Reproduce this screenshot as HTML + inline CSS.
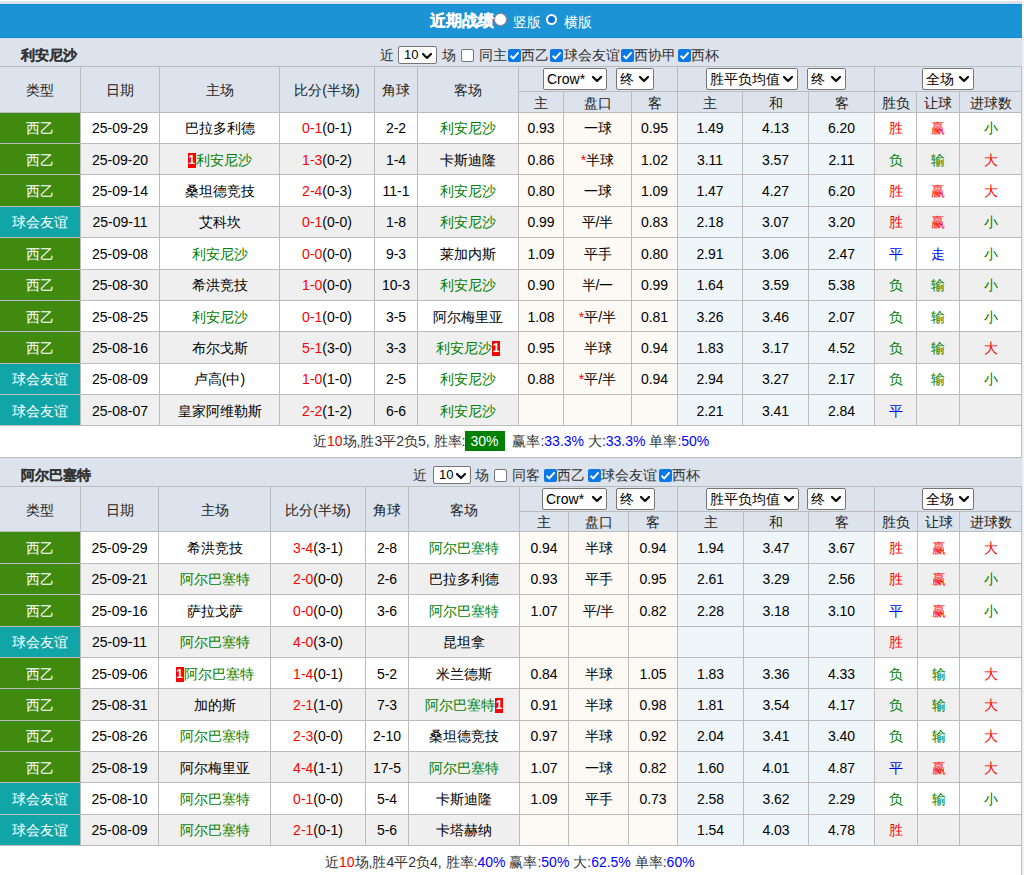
<!DOCTYPE html>
<html><head><meta charset="utf-8"><style>
html,body{margin:0;padding:0;}
body{width:1024px;height:875px;overflow:hidden;position:relative;background:#fff;font-family:"Liberation Sans",sans-serif;font-size:14px;color:#333;}
body div{position:absolute;box-sizing:content-box;}
.c{display:flex;align-items:center;justify-content:center;white-space:nowrap;}
.sel{background:#fff;border:1px solid #767676;border-radius:2px;color:#000;}
.bd{display:inline-block;background:#f00;color:#fff;font-weight:bold;font-size:12px;line-height:15px;height:15px;width:8px;text-align:center;vertical-align:middle;}
.sum{white-space:nowrap;color:#333;}
.pct{display:inline-block;background:#008000;color:#fff;padding:0 6px;line-height:20px;height:20px;margin:0 4px 0 -1px;}
</style></head><body>
<div style="left:0px;top:1px;width:1022px;height:3px;background:#dce3ed;"></div>
<div style="left:0px;top:4px;width:1022px;height:34px;background:#1c93d4;"></div>
<div style="left:0px;top:4px;width:1022px;height:1px;background:#0a88dc;"></div>
<div style="left:0px;top:37px;width:1022px;height:1px;background:#0a88dc;"></div>
<div style="left:1022px;top:38px;width:2px;height:837px;background:#f0f0f0;"></div>
<div class="c" style="left:430px;top:4px;height:34px;line-height:34px;color:#fff;font-size:16px;font-weight:bold;justify-content:flex-start;-webkit-text-stroke:0.3px #fff;">近期战绩</div>
<div style="left:494px;top:13px;width:11px;height:11px;border-radius:50%;background:#fff;border:1px solid #b08080"></div>
<div class="c" style="left:513px;top:5px;height:34px;line-height:34px;color:#fff;font-size:14px;justify-content:flex-start;">竖版</div>
<div style="left:546px;top:14px;width:7px;height:7px;border-radius:50%;background:#0b6fd8;border:2px solid #fff"></div>
<div class="c" style="left:564px;top:5px;height:34px;line-height:34px;color:#fff;font-size:14px;justify-content:flex-start;">横版</div>
<div style="left:0px;top:38px;width:1022px;height:28px;background:#dce3ed;"></div>
<div class="c" style="left:21px;top:41px;width:179px;height:28px;line-height:28px;color:#333;font-size:14px;font-weight:bold;text-align:left;justify-content:flex-start;-webkit-text-stroke:0.15px #333;">利安尼沙</div>
<div style="left:0px;top:66px;width:1022px;height:46px;background:#dce3ed;"></div>
<div style="left:0px;top:66px;width:1022px;height:1px;background:#bcbcbc;"></div>
<div style="left:518px;top:91px;width:503px;height:1px;background:#bcbcbc;"></div>
<div style="left:0px;top:112px;width:1022px;height:1px;background:#bcbcbc;"></div>
<div style="left:80px;top:66px;width:1px;height:46px;background:#bcbcbc;"></div>
<div style="left:159px;top:66px;width:1px;height:46px;background:#bcbcbc;"></div>
<div style="left:279px;top:66px;width:1px;height:46px;background:#bcbcbc;"></div>
<div style="left:374px;top:66px;width:1px;height:46px;background:#bcbcbc;"></div>
<div style="left:417px;top:66px;width:1px;height:46px;background:#bcbcbc;"></div>
<div style="left:518px;top:66px;width:1px;height:46px;background:#bcbcbc;"></div>
<div style="left:563px;top:91px;width:1px;height:21px;background:#bcbcbc;"></div>
<div style="left:631px;top:91px;width:1px;height:21px;background:#bcbcbc;"></div>
<div style="left:677px;top:66px;width:1px;height:46px;background:#bcbcbc;"></div>
<div style="left:742px;top:91px;width:1px;height:21px;background:#bcbcbc;"></div>
<div style="left:808px;top:91px;width:1px;height:21px;background:#bcbcbc;"></div>
<div style="left:874px;top:66px;width:1px;height:46px;background:#bcbcbc;"></div>
<div style="left:916px;top:91px;width:1px;height:21px;background:#bcbcbc;"></div>
<div style="left:959px;top:91px;width:1px;height:21px;background:#bcbcbc;"></div>
<div style="left:1021px;top:66px;width:1px;height:46px;background:#bcbcbc;"></div>
<div class="c" style="left:0px;top:68px;width:80px;height:45px;line-height:45px;color:#222;font-size:14px;">类型</div>
<div class="c" style="left:81px;top:68px;width:78px;height:45px;line-height:45px;color:#222;font-size:14px;">日期</div>
<div class="c" style="left:160px;top:68px;width:119px;height:45px;line-height:45px;color:#222;font-size:14px;">主场</div>
<div class="c" style="left:280px;top:68px;width:94px;height:45px;line-height:45px;color:#222;font-size:14px;">比分(半场)</div>
<div class="c" style="left:375px;top:68px;width:42px;height:45px;line-height:45px;color:#222;font-size:14px;">角球</div>
<div class="c" style="left:418px;top:68px;width:100px;height:45px;line-height:45px;color:#222;font-size:14px;">客场</div>
<div class="c" style="left:519px;top:93px;width:44px;height:20px;line-height:20px;color:#222;font-size:14px;">主</div>
<div class="c" style="left:564px;top:93px;width:67px;height:20px;line-height:20px;color:#222;font-size:14px;">盘口</div>
<div class="c" style="left:632px;top:93px;width:45px;height:20px;line-height:20px;color:#222;font-size:14px;">客</div>
<div class="c" style="left:678px;top:93px;width:64px;height:20px;line-height:20px;color:#222;font-size:14px;">主</div>
<div class="c" style="left:743px;top:93px;width:65px;height:20px;line-height:20px;color:#222;font-size:14px;">和</div>
<div class="c" style="left:809px;top:93px;width:65px;height:20px;line-height:20px;color:#222;font-size:14px;">客</div>
<div class="c" style="left:875px;top:93px;width:41px;height:20px;line-height:20px;color:#222;font-size:14px;">胜负</div>
<div class="c" style="left:917px;top:93px;width:42px;height:20px;line-height:20px;color:#222;font-size:14px;">让球</div>
<div class="c" style="left:960px;top:93px;width:61px;height:20px;line-height:20px;color:#222;font-size:14px;">进球数</div>
<div class="sel" style="left:543px;top:68px;width:62px;height:20px;"><span style="position:absolute;left:3px;top:0;line-height:20px;font-size:14px">Crow*</span><svg style="position:absolute;left:48px;top:7px" width="10" height="6" viewBox="0 0 10 6"><path d="M1 1 L5.0 5 L9 1" fill="none" stroke="#111" stroke-width="2.3" stroke-linecap="round" stroke-linejoin="round"/></svg></div>
<div class="sel" style="left:616px;top:68px;width:36px;height:20px;"><span style="position:absolute;left:3px;top:0;line-height:20px;font-size:14px">终</span><svg style="position:absolute;left:22px;top:7px" width="10" height="6" viewBox="0 0 10 6"><path d="M1 1 L5.0 5 L9 1" fill="none" stroke="#111" stroke-width="2.3" stroke-linecap="round" stroke-linejoin="round"/></svg></div>
<div class="sel" style="left:706px;top:68px;width:90px;height:20px;"><span style="position:absolute;left:3px;top:0;line-height:20px;font-size:14px">胜平负均值</span><svg style="position:absolute;left:76px;top:7px" width="10" height="6" viewBox="0 0 10 6"><path d="M1 1 L5.0 5 L9 1" fill="none" stroke="#111" stroke-width="2.3" stroke-linecap="round" stroke-linejoin="round"/></svg></div>
<div class="sel" style="left:807px;top:68px;width:37px;height:20px;"><span style="position:absolute;left:3px;top:0;line-height:20px;font-size:14px">终</span><svg style="position:absolute;left:23px;top:7px" width="10" height="6" viewBox="0 0 10 6"><path d="M1 1 L5.0 5 L9 1" fill="none" stroke="#111" stroke-width="2.3" stroke-linecap="round" stroke-linejoin="round"/></svg></div>
<div class="sel" style="left:922px;top:68px;width:50px;height:20px;"><span style="position:absolute;left:3px;top:0;line-height:20px;font-size:14px">全场</span><svg style="position:absolute;left:36px;top:7px" width="10" height="6" viewBox="0 0 10 6"><path d="M1 1 L5.0 5 L9 1" fill="none" stroke="#111" stroke-width="2.3" stroke-linecap="round" stroke-linejoin="round"/></svg></div>
<div style="left:0px;top:113px;width:80px;height:30px;background:#408a10;"></div>
<div style="left:81px;top:113px;width:78px;height:30px;background:#fff;"></div>
<div style="left:160px;top:113px;width:119px;height:30px;background:#fff;"></div>
<div style="left:280px;top:113px;width:94px;height:30px;background:#fff;"></div>
<div style="left:375px;top:113px;width:42px;height:30px;background:#fff;"></div>
<div style="left:418px;top:113px;width:100px;height:30px;background:#fff;"></div>
<div style="left:519px;top:113px;width:44px;height:30px;background:#fdf9f5;"></div>
<div style="left:564px;top:113px;width:67px;height:30px;background:#fdf9f5;"></div>
<div style="left:632px;top:113px;width:45px;height:30px;background:#fdf9f5;"></div>
<div style="left:678px;top:113px;width:64px;height:30px;background:#eff6fa;"></div>
<div style="left:743px;top:113px;width:65px;height:30px;background:#eff6fa;"></div>
<div style="left:809px;top:113px;width:65px;height:30px;background:#eff6fa;"></div>
<div style="left:875px;top:113px;width:41px;height:30px;background:#fff;"></div>
<div style="left:917px;top:113px;width:42px;height:30px;background:#fff;"></div>
<div style="left:960px;top:113px;width:61px;height:30px;background:#fff;"></div>
<div class="c" style="left:0px;top:113px;width:80px;height:30px;line-height:30px;color:#fff;font-size:14px;">西乙</div>
<div class="c" style="left:81px;top:113px;width:78px;height:30px;line-height:30px;color:#000;font-size:14px;">25-09-29</div>
<div class="c" style="left:160px;top:113px;width:119px;height:30px;line-height:30px;color:#000;font-size:14px;">巴拉多利德</div>
<div class="c" style="left:280px;top:113px;width:94px;height:30px;line-height:30px;color:#000;font-size:14px;"><span style="color:#ff0000">0-1</span>(0-1)</div>
<div class="c" style="left:375px;top:113px;width:42px;height:30px;line-height:30px;color:#000;font-size:14px;">2-2</div>
<div class="c" style="left:418px;top:113px;width:100px;height:30px;line-height:30px;color:#008000;font-size:14px;">利安尼沙</div>
<div class="c" style="left:519px;top:113px;width:44px;height:30px;line-height:30px;color:#000;font-size:14px;">0.93</div>
<div class="c" style="left:564px;top:113px;width:67px;height:30px;line-height:30px;color:#000;font-size:14px;">一球</div>
<div class="c" style="left:632px;top:113px;width:45px;height:30px;line-height:30px;color:#000;font-size:14px;">0.95</div>
<div class="c" style="left:678px;top:113px;width:64px;height:30px;line-height:30px;color:#000;font-size:14px;">1.49</div>
<div class="c" style="left:743px;top:113px;width:65px;height:30px;line-height:30px;color:#000;font-size:14px;">4.13</div>
<div class="c" style="left:809px;top:113px;width:65px;height:30px;line-height:30px;color:#000;font-size:14px;">6.20</div>
<div class="c" style="left:875px;top:113px;width:41px;height:30px;line-height:30px;color:#ff0000;font-size:14px;">胜</div>
<div class="c" style="left:917px;top:113px;width:42px;height:30px;line-height:30px;color:#ff0000;font-size:14px;">赢</div>
<div class="c" style="left:960px;top:113px;width:61px;height:30px;line-height:30px;color:#008000;font-size:14px;">小</div>
<div style="left:0px;top:144px;width:80px;height:30px;background:#408a10;"></div>
<div style="left:81px;top:144px;width:78px;height:30px;background:#efefef;"></div>
<div style="left:160px;top:144px;width:119px;height:30px;background:#efefef;"></div>
<div style="left:280px;top:144px;width:94px;height:30px;background:#efefef;"></div>
<div style="left:375px;top:144px;width:42px;height:30px;background:#efefef;"></div>
<div style="left:418px;top:144px;width:100px;height:30px;background:#efefef;"></div>
<div style="left:519px;top:144px;width:44px;height:30px;background:#fdf9f5;"></div>
<div style="left:564px;top:144px;width:67px;height:30px;background:#fdf9f5;"></div>
<div style="left:632px;top:144px;width:45px;height:30px;background:#fdf9f5;"></div>
<div style="left:678px;top:144px;width:64px;height:30px;background:#eff6fa;"></div>
<div style="left:743px;top:144px;width:65px;height:30px;background:#eff6fa;"></div>
<div style="left:809px;top:144px;width:65px;height:30px;background:#eff6fa;"></div>
<div style="left:875px;top:144px;width:41px;height:30px;background:#efefef;"></div>
<div style="left:917px;top:144px;width:42px;height:30px;background:#efefef;"></div>
<div style="left:960px;top:144px;width:61px;height:30px;background:#efefef;"></div>
<div class="c" style="left:0px;top:145px;width:80px;height:30px;line-height:30px;color:#fff;font-size:14px;">西乙</div>
<div class="c" style="left:81px;top:145px;width:78px;height:30px;line-height:30px;color:#000;font-size:14px;">25-09-20</div>
<div class="c" style="left:160px;top:145px;width:119px;height:30px;line-height:30px;color:#008000;font-size:14px;"><span class="bd">1</span>利安尼沙</div>
<div class="c" style="left:280px;top:145px;width:94px;height:30px;line-height:30px;color:#000;font-size:14px;"><span style="color:#ff0000">1-3</span>(0-2)</div>
<div class="c" style="left:375px;top:145px;width:42px;height:30px;line-height:30px;color:#000;font-size:14px;">1-4</div>
<div class="c" style="left:418px;top:145px;width:100px;height:30px;line-height:30px;color:#000;font-size:14px;">卡斯迪隆</div>
<div class="c" style="left:519px;top:145px;width:44px;height:30px;line-height:30px;color:#000;font-size:14px;">0.86</div>
<div class="c" style="left:564px;top:145px;width:67px;height:30px;line-height:30px;color:#000;font-size:14px;"><span style="color:#ff0000">*</span>半球</div>
<div class="c" style="left:632px;top:145px;width:45px;height:30px;line-height:30px;color:#000;font-size:14px;">1.02</div>
<div class="c" style="left:678px;top:145px;width:64px;height:30px;line-height:30px;color:#000;font-size:14px;">3.11</div>
<div class="c" style="left:743px;top:145px;width:65px;height:30px;line-height:30px;color:#000;font-size:14px;">3.57</div>
<div class="c" style="left:809px;top:145px;width:65px;height:30px;line-height:30px;color:#000;font-size:14px;">2.11</div>
<div class="c" style="left:875px;top:145px;width:41px;height:30px;line-height:30px;color:#008000;font-size:14px;">负</div>
<div class="c" style="left:917px;top:145px;width:42px;height:30px;line-height:30px;color:#008000;font-size:14px;">输</div>
<div class="c" style="left:960px;top:145px;width:61px;height:30px;line-height:30px;color:#ff0000;font-size:14px;">大</div>
<div style="left:0px;top:175px;width:80px;height:31px;background:#408a10;"></div>
<div style="left:81px;top:175px;width:78px;height:31px;background:#fff;"></div>
<div style="left:160px;top:175px;width:119px;height:31px;background:#fff;"></div>
<div style="left:280px;top:175px;width:94px;height:31px;background:#fff;"></div>
<div style="left:375px;top:175px;width:42px;height:31px;background:#fff;"></div>
<div style="left:418px;top:175px;width:100px;height:31px;background:#fff;"></div>
<div style="left:519px;top:175px;width:44px;height:31px;background:#fdf9f5;"></div>
<div style="left:564px;top:175px;width:67px;height:31px;background:#fdf9f5;"></div>
<div style="left:632px;top:175px;width:45px;height:31px;background:#fdf9f5;"></div>
<div style="left:678px;top:175px;width:64px;height:31px;background:#eff6fa;"></div>
<div style="left:743px;top:175px;width:65px;height:31px;background:#eff6fa;"></div>
<div style="left:809px;top:175px;width:65px;height:31px;background:#eff6fa;"></div>
<div style="left:875px;top:175px;width:41px;height:31px;background:#fff;"></div>
<div style="left:917px;top:175px;width:42px;height:31px;background:#fff;"></div>
<div style="left:960px;top:175px;width:61px;height:31px;background:#fff;"></div>
<div class="c" style="left:0px;top:176px;width:80px;height:30px;line-height:30px;color:#fff;font-size:14px;">西乙</div>
<div class="c" style="left:81px;top:176px;width:78px;height:30px;line-height:30px;color:#000;font-size:14px;">25-09-14</div>
<div class="c" style="left:160px;top:176px;width:119px;height:30px;line-height:30px;color:#000;font-size:14px;">桑坦德竞技</div>
<div class="c" style="left:280px;top:176px;width:94px;height:30px;line-height:30px;color:#000;font-size:14px;"><span style="color:#ff0000">2-4</span>(0-3)</div>
<div class="c" style="left:375px;top:176px;width:42px;height:30px;line-height:30px;color:#000;font-size:14px;">11-1</div>
<div class="c" style="left:418px;top:176px;width:100px;height:30px;line-height:30px;color:#008000;font-size:14px;">利安尼沙</div>
<div class="c" style="left:519px;top:176px;width:44px;height:30px;line-height:30px;color:#000;font-size:14px;">0.80</div>
<div class="c" style="left:564px;top:176px;width:67px;height:30px;line-height:30px;color:#000;font-size:14px;">一球</div>
<div class="c" style="left:632px;top:176px;width:45px;height:30px;line-height:30px;color:#000;font-size:14px;">1.09</div>
<div class="c" style="left:678px;top:176px;width:64px;height:30px;line-height:30px;color:#000;font-size:14px;">1.47</div>
<div class="c" style="left:743px;top:176px;width:65px;height:30px;line-height:30px;color:#000;font-size:14px;">4.27</div>
<div class="c" style="left:809px;top:176px;width:65px;height:30px;line-height:30px;color:#000;font-size:14px;">6.20</div>
<div class="c" style="left:875px;top:176px;width:41px;height:30px;line-height:30px;color:#ff0000;font-size:14px;">胜</div>
<div class="c" style="left:917px;top:176px;width:42px;height:30px;line-height:30px;color:#ff0000;font-size:14px;">赢</div>
<div class="c" style="left:960px;top:176px;width:61px;height:30px;line-height:30px;color:#ff0000;font-size:14px;">大</div>
<div style="left:0px;top:207px;width:80px;height:30px;background:#12a5a8;"></div>
<div style="left:81px;top:207px;width:78px;height:30px;background:#efefef;"></div>
<div style="left:160px;top:207px;width:119px;height:30px;background:#efefef;"></div>
<div style="left:280px;top:207px;width:94px;height:30px;background:#efefef;"></div>
<div style="left:375px;top:207px;width:42px;height:30px;background:#efefef;"></div>
<div style="left:418px;top:207px;width:100px;height:30px;background:#efefef;"></div>
<div style="left:519px;top:207px;width:44px;height:30px;background:#fdf9f5;"></div>
<div style="left:564px;top:207px;width:67px;height:30px;background:#fdf9f5;"></div>
<div style="left:632px;top:207px;width:45px;height:30px;background:#fdf9f5;"></div>
<div style="left:678px;top:207px;width:64px;height:30px;background:#eff6fa;"></div>
<div style="left:743px;top:207px;width:65px;height:30px;background:#eff6fa;"></div>
<div style="left:809px;top:207px;width:65px;height:30px;background:#eff6fa;"></div>
<div style="left:875px;top:207px;width:41px;height:30px;background:#efefef;"></div>
<div style="left:917px;top:207px;width:42px;height:30px;background:#efefef;"></div>
<div style="left:960px;top:207px;width:61px;height:30px;background:#efefef;"></div>
<div class="c" style="left:0px;top:207px;width:80px;height:30px;line-height:30px;color:#fff;font-size:14px;">球会友谊</div>
<div class="c" style="left:81px;top:207px;width:78px;height:30px;line-height:30px;color:#000;font-size:14px;">25-09-11</div>
<div class="c" style="left:160px;top:207px;width:119px;height:30px;line-height:30px;color:#000;font-size:14px;">艾科坎</div>
<div class="c" style="left:280px;top:207px;width:94px;height:30px;line-height:30px;color:#000;font-size:14px;"><span style="color:#ff0000">0-1</span>(0-0)</div>
<div class="c" style="left:375px;top:207px;width:42px;height:30px;line-height:30px;color:#000;font-size:14px;">1-8</div>
<div class="c" style="left:418px;top:207px;width:100px;height:30px;line-height:30px;color:#008000;font-size:14px;">利安尼沙</div>
<div class="c" style="left:519px;top:207px;width:44px;height:30px;line-height:30px;color:#000;font-size:14px;">0.99</div>
<div class="c" style="left:564px;top:207px;width:67px;height:30px;line-height:30px;color:#000;font-size:14px;">平/半</div>
<div class="c" style="left:632px;top:207px;width:45px;height:30px;line-height:30px;color:#000;font-size:14px;">0.83</div>
<div class="c" style="left:678px;top:207px;width:64px;height:30px;line-height:30px;color:#000;font-size:14px;">2.18</div>
<div class="c" style="left:743px;top:207px;width:65px;height:30px;line-height:30px;color:#000;font-size:14px;">3.07</div>
<div class="c" style="left:809px;top:207px;width:65px;height:30px;line-height:30px;color:#000;font-size:14px;">3.20</div>
<div class="c" style="left:875px;top:207px;width:41px;height:30px;line-height:30px;color:#ff0000;font-size:14px;">胜</div>
<div class="c" style="left:917px;top:207px;width:42px;height:30px;line-height:30px;color:#ff0000;font-size:14px;">赢</div>
<div class="c" style="left:960px;top:207px;width:61px;height:30px;line-height:30px;color:#008000;font-size:14px;">小</div>
<div style="left:0px;top:238px;width:80px;height:31px;background:#408a10;"></div>
<div style="left:81px;top:238px;width:78px;height:31px;background:#fff;"></div>
<div style="left:160px;top:238px;width:119px;height:31px;background:#fff;"></div>
<div style="left:280px;top:238px;width:94px;height:31px;background:#fff;"></div>
<div style="left:375px;top:238px;width:42px;height:31px;background:#fff;"></div>
<div style="left:418px;top:238px;width:100px;height:31px;background:#fff;"></div>
<div style="left:519px;top:238px;width:44px;height:31px;background:#fdf9f5;"></div>
<div style="left:564px;top:238px;width:67px;height:31px;background:#fdf9f5;"></div>
<div style="left:632px;top:238px;width:45px;height:31px;background:#fdf9f5;"></div>
<div style="left:678px;top:238px;width:64px;height:31px;background:#eff6fa;"></div>
<div style="left:743px;top:238px;width:65px;height:31px;background:#eff6fa;"></div>
<div style="left:809px;top:238px;width:65px;height:31px;background:#eff6fa;"></div>
<div style="left:875px;top:238px;width:41px;height:31px;background:#fff;"></div>
<div style="left:917px;top:238px;width:42px;height:31px;background:#fff;"></div>
<div style="left:960px;top:238px;width:61px;height:31px;background:#fff;"></div>
<div class="c" style="left:0px;top:239px;width:80px;height:30px;line-height:30px;color:#fff;font-size:14px;">西乙</div>
<div class="c" style="left:81px;top:239px;width:78px;height:30px;line-height:30px;color:#000;font-size:14px;">25-09-08</div>
<div class="c" style="left:160px;top:239px;width:119px;height:30px;line-height:30px;color:#008000;font-size:14px;">利安尼沙</div>
<div class="c" style="left:280px;top:239px;width:94px;height:30px;line-height:30px;color:#000;font-size:14px;"><span style="color:#ff0000">0-0</span>(0-0)</div>
<div class="c" style="left:375px;top:239px;width:42px;height:30px;line-height:30px;color:#000;font-size:14px;">9-3</div>
<div class="c" style="left:418px;top:239px;width:100px;height:30px;line-height:30px;color:#000;font-size:14px;">莱加内斯</div>
<div class="c" style="left:519px;top:239px;width:44px;height:30px;line-height:30px;color:#000;font-size:14px;">1.09</div>
<div class="c" style="left:564px;top:239px;width:67px;height:30px;line-height:30px;color:#000;font-size:14px;">平手</div>
<div class="c" style="left:632px;top:239px;width:45px;height:30px;line-height:30px;color:#000;font-size:14px;">0.80</div>
<div class="c" style="left:678px;top:239px;width:64px;height:30px;line-height:30px;color:#000;font-size:14px;">2.91</div>
<div class="c" style="left:743px;top:239px;width:65px;height:30px;line-height:30px;color:#000;font-size:14px;">3.06</div>
<div class="c" style="left:809px;top:239px;width:65px;height:30px;line-height:30px;color:#000;font-size:14px;">2.47</div>
<div class="c" style="left:875px;top:239px;width:41px;height:30px;line-height:30px;color:#0000ff;font-size:14px;">平</div>
<div class="c" style="left:917px;top:239px;width:42px;height:30px;line-height:30px;color:#0000ff;font-size:14px;">走</div>
<div class="c" style="left:960px;top:239px;width:61px;height:30px;line-height:30px;color:#008000;font-size:14px;">小</div>
<div style="left:0px;top:270px;width:80px;height:30px;background:#408a10;"></div>
<div style="left:81px;top:270px;width:78px;height:30px;background:#efefef;"></div>
<div style="left:160px;top:270px;width:119px;height:30px;background:#efefef;"></div>
<div style="left:280px;top:270px;width:94px;height:30px;background:#efefef;"></div>
<div style="left:375px;top:270px;width:42px;height:30px;background:#efefef;"></div>
<div style="left:418px;top:270px;width:100px;height:30px;background:#efefef;"></div>
<div style="left:519px;top:270px;width:44px;height:30px;background:#fdf9f5;"></div>
<div style="left:564px;top:270px;width:67px;height:30px;background:#fdf9f5;"></div>
<div style="left:632px;top:270px;width:45px;height:30px;background:#fdf9f5;"></div>
<div style="left:678px;top:270px;width:64px;height:30px;background:#eff6fa;"></div>
<div style="left:743px;top:270px;width:65px;height:30px;background:#eff6fa;"></div>
<div style="left:809px;top:270px;width:65px;height:30px;background:#eff6fa;"></div>
<div style="left:875px;top:270px;width:41px;height:30px;background:#efefef;"></div>
<div style="left:917px;top:270px;width:42px;height:30px;background:#efefef;"></div>
<div style="left:960px;top:270px;width:61px;height:30px;background:#efefef;"></div>
<div class="c" style="left:0px;top:270px;width:80px;height:30px;line-height:30px;color:#fff;font-size:14px;">西乙</div>
<div class="c" style="left:81px;top:270px;width:78px;height:30px;line-height:30px;color:#000;font-size:14px;">25-08-30</div>
<div class="c" style="left:160px;top:270px;width:119px;height:30px;line-height:30px;color:#000;font-size:14px;">希洪竞技</div>
<div class="c" style="left:280px;top:270px;width:94px;height:30px;line-height:30px;color:#000;font-size:14px;"><span style="color:#ff0000">1-0</span>(0-0)</div>
<div class="c" style="left:375px;top:270px;width:42px;height:30px;line-height:30px;color:#000;font-size:14px;">10-3</div>
<div class="c" style="left:418px;top:270px;width:100px;height:30px;line-height:30px;color:#008000;font-size:14px;">利安尼沙</div>
<div class="c" style="left:519px;top:270px;width:44px;height:30px;line-height:30px;color:#000;font-size:14px;">0.90</div>
<div class="c" style="left:564px;top:270px;width:67px;height:30px;line-height:30px;color:#000;font-size:14px;">半/一</div>
<div class="c" style="left:632px;top:270px;width:45px;height:30px;line-height:30px;color:#000;font-size:14px;">0.99</div>
<div class="c" style="left:678px;top:270px;width:64px;height:30px;line-height:30px;color:#000;font-size:14px;">1.64</div>
<div class="c" style="left:743px;top:270px;width:65px;height:30px;line-height:30px;color:#000;font-size:14px;">3.59</div>
<div class="c" style="left:809px;top:270px;width:65px;height:30px;line-height:30px;color:#000;font-size:14px;">5.38</div>
<div class="c" style="left:875px;top:270px;width:41px;height:30px;line-height:30px;color:#008000;font-size:14px;">负</div>
<div class="c" style="left:917px;top:270px;width:42px;height:30px;line-height:30px;color:#008000;font-size:14px;">输</div>
<div class="c" style="left:960px;top:270px;width:61px;height:30px;line-height:30px;color:#008000;font-size:14px;">小</div>
<div style="left:0px;top:301px;width:80px;height:30px;background:#408a10;"></div>
<div style="left:81px;top:301px;width:78px;height:30px;background:#fff;"></div>
<div style="left:160px;top:301px;width:119px;height:30px;background:#fff;"></div>
<div style="left:280px;top:301px;width:94px;height:30px;background:#fff;"></div>
<div style="left:375px;top:301px;width:42px;height:30px;background:#fff;"></div>
<div style="left:418px;top:301px;width:100px;height:30px;background:#fff;"></div>
<div style="left:519px;top:301px;width:44px;height:30px;background:#fdf9f5;"></div>
<div style="left:564px;top:301px;width:67px;height:30px;background:#fdf9f5;"></div>
<div style="left:632px;top:301px;width:45px;height:30px;background:#fdf9f5;"></div>
<div style="left:678px;top:301px;width:64px;height:30px;background:#eff6fa;"></div>
<div style="left:743px;top:301px;width:65px;height:30px;background:#eff6fa;"></div>
<div style="left:809px;top:301px;width:65px;height:30px;background:#eff6fa;"></div>
<div style="left:875px;top:301px;width:41px;height:30px;background:#fff;"></div>
<div style="left:917px;top:301px;width:42px;height:30px;background:#fff;"></div>
<div style="left:960px;top:301px;width:61px;height:30px;background:#fff;"></div>
<div class="c" style="left:0px;top:302px;width:80px;height:30px;line-height:30px;color:#fff;font-size:14px;">西乙</div>
<div class="c" style="left:81px;top:302px;width:78px;height:30px;line-height:30px;color:#000;font-size:14px;">25-08-25</div>
<div class="c" style="left:160px;top:302px;width:119px;height:30px;line-height:30px;color:#008000;font-size:14px;">利安尼沙</div>
<div class="c" style="left:280px;top:302px;width:94px;height:30px;line-height:30px;color:#000;font-size:14px;"><span style="color:#ff0000">0-1</span>(0-0)</div>
<div class="c" style="left:375px;top:302px;width:42px;height:30px;line-height:30px;color:#000;font-size:14px;">3-5</div>
<div class="c" style="left:418px;top:302px;width:100px;height:30px;line-height:30px;color:#000;font-size:14px;">阿尔梅里亚</div>
<div class="c" style="left:519px;top:302px;width:44px;height:30px;line-height:30px;color:#000;font-size:14px;">1.08</div>
<div class="c" style="left:564px;top:302px;width:67px;height:30px;line-height:30px;color:#000;font-size:14px;"><span style="color:#ff0000">*</span>平/半</div>
<div class="c" style="left:632px;top:302px;width:45px;height:30px;line-height:30px;color:#000;font-size:14px;">0.81</div>
<div class="c" style="left:678px;top:302px;width:64px;height:30px;line-height:30px;color:#000;font-size:14px;">3.26</div>
<div class="c" style="left:743px;top:302px;width:65px;height:30px;line-height:30px;color:#000;font-size:14px;">3.46</div>
<div class="c" style="left:809px;top:302px;width:65px;height:30px;line-height:30px;color:#000;font-size:14px;">2.07</div>
<div class="c" style="left:875px;top:302px;width:41px;height:30px;line-height:30px;color:#008000;font-size:14px;">负</div>
<div class="c" style="left:917px;top:302px;width:42px;height:30px;line-height:30px;color:#008000;font-size:14px;">输</div>
<div class="c" style="left:960px;top:302px;width:61px;height:30px;line-height:30px;color:#008000;font-size:14px;">小</div>
<div style="left:0px;top:332px;width:80px;height:31px;background:#408a10;"></div>
<div style="left:81px;top:332px;width:78px;height:31px;background:#efefef;"></div>
<div style="left:160px;top:332px;width:119px;height:31px;background:#efefef;"></div>
<div style="left:280px;top:332px;width:94px;height:31px;background:#efefef;"></div>
<div style="left:375px;top:332px;width:42px;height:31px;background:#efefef;"></div>
<div style="left:418px;top:332px;width:100px;height:31px;background:#efefef;"></div>
<div style="left:519px;top:332px;width:44px;height:31px;background:#fdf9f5;"></div>
<div style="left:564px;top:332px;width:67px;height:31px;background:#fdf9f5;"></div>
<div style="left:632px;top:332px;width:45px;height:31px;background:#fdf9f5;"></div>
<div style="left:678px;top:332px;width:64px;height:31px;background:#eff6fa;"></div>
<div style="left:743px;top:332px;width:65px;height:31px;background:#eff6fa;"></div>
<div style="left:809px;top:332px;width:65px;height:31px;background:#eff6fa;"></div>
<div style="left:875px;top:332px;width:41px;height:31px;background:#efefef;"></div>
<div style="left:917px;top:332px;width:42px;height:31px;background:#efefef;"></div>
<div style="left:960px;top:332px;width:61px;height:31px;background:#efefef;"></div>
<div class="c" style="left:0px;top:333px;width:80px;height:30px;line-height:30px;color:#fff;font-size:14px;">西乙</div>
<div class="c" style="left:81px;top:333px;width:78px;height:30px;line-height:30px;color:#000;font-size:14px;">25-08-16</div>
<div class="c" style="left:160px;top:333px;width:119px;height:30px;line-height:30px;color:#000;font-size:14px;">布尔戈斯</div>
<div class="c" style="left:280px;top:333px;width:94px;height:30px;line-height:30px;color:#000;font-size:14px;"><span style="color:#ff0000">5-1</span>(3-0)</div>
<div class="c" style="left:375px;top:333px;width:42px;height:30px;line-height:30px;color:#000;font-size:14px;">3-3</div>
<div class="c" style="left:418px;top:333px;width:100px;height:30px;line-height:30px;color:#008000;font-size:14px;">利安尼沙<span class="bd">1</span></div>
<div class="c" style="left:519px;top:333px;width:44px;height:30px;line-height:30px;color:#000;font-size:14px;">0.95</div>
<div class="c" style="left:564px;top:333px;width:67px;height:30px;line-height:30px;color:#000;font-size:14px;">半球</div>
<div class="c" style="left:632px;top:333px;width:45px;height:30px;line-height:30px;color:#000;font-size:14px;">0.94</div>
<div class="c" style="left:678px;top:333px;width:64px;height:30px;line-height:30px;color:#000;font-size:14px;">1.83</div>
<div class="c" style="left:743px;top:333px;width:65px;height:30px;line-height:30px;color:#000;font-size:14px;">3.17</div>
<div class="c" style="left:809px;top:333px;width:65px;height:30px;line-height:30px;color:#000;font-size:14px;">4.52</div>
<div class="c" style="left:875px;top:333px;width:41px;height:30px;line-height:30px;color:#008000;font-size:14px;">负</div>
<div class="c" style="left:917px;top:333px;width:42px;height:30px;line-height:30px;color:#008000;font-size:14px;">输</div>
<div class="c" style="left:960px;top:333px;width:61px;height:30px;line-height:30px;color:#ff0000;font-size:14px;">大</div>
<div style="left:0px;top:364px;width:80px;height:30px;background:#12a5a8;"></div>
<div style="left:81px;top:364px;width:78px;height:30px;background:#fff;"></div>
<div style="left:160px;top:364px;width:119px;height:30px;background:#fff;"></div>
<div style="left:280px;top:364px;width:94px;height:30px;background:#fff;"></div>
<div style="left:375px;top:364px;width:42px;height:30px;background:#fff;"></div>
<div style="left:418px;top:364px;width:100px;height:30px;background:#fff;"></div>
<div style="left:519px;top:364px;width:44px;height:30px;background:#fdf9f5;"></div>
<div style="left:564px;top:364px;width:67px;height:30px;background:#fdf9f5;"></div>
<div style="left:632px;top:364px;width:45px;height:30px;background:#fdf9f5;"></div>
<div style="left:678px;top:364px;width:64px;height:30px;background:#eff6fa;"></div>
<div style="left:743px;top:364px;width:65px;height:30px;background:#eff6fa;"></div>
<div style="left:809px;top:364px;width:65px;height:30px;background:#eff6fa;"></div>
<div style="left:875px;top:364px;width:41px;height:30px;background:#fff;"></div>
<div style="left:917px;top:364px;width:42px;height:30px;background:#fff;"></div>
<div style="left:960px;top:364px;width:61px;height:30px;background:#fff;"></div>
<div class="c" style="left:0px;top:364px;width:80px;height:30px;line-height:30px;color:#fff;font-size:14px;">球会友谊</div>
<div class="c" style="left:81px;top:364px;width:78px;height:30px;line-height:30px;color:#000;font-size:14px;">25-08-09</div>
<div class="c" style="left:160px;top:364px;width:119px;height:30px;line-height:30px;color:#000;font-size:14px;">卢高(中)</div>
<div class="c" style="left:280px;top:364px;width:94px;height:30px;line-height:30px;color:#000;font-size:14px;"><span style="color:#ff0000">1-0</span>(1-0)</div>
<div class="c" style="left:375px;top:364px;width:42px;height:30px;line-height:30px;color:#000;font-size:14px;">2-5</div>
<div class="c" style="left:418px;top:364px;width:100px;height:30px;line-height:30px;color:#008000;font-size:14px;">利安尼沙</div>
<div class="c" style="left:519px;top:364px;width:44px;height:30px;line-height:30px;color:#000;font-size:14px;">0.88</div>
<div class="c" style="left:564px;top:364px;width:67px;height:30px;line-height:30px;color:#000;font-size:14px;"><span style="color:#ff0000">*</span>平/半</div>
<div class="c" style="left:632px;top:364px;width:45px;height:30px;line-height:30px;color:#000;font-size:14px;">0.94</div>
<div class="c" style="left:678px;top:364px;width:64px;height:30px;line-height:30px;color:#000;font-size:14px;">2.94</div>
<div class="c" style="left:743px;top:364px;width:65px;height:30px;line-height:30px;color:#000;font-size:14px;">3.27</div>
<div class="c" style="left:809px;top:364px;width:65px;height:30px;line-height:30px;color:#000;font-size:14px;">2.17</div>
<div class="c" style="left:875px;top:364px;width:41px;height:30px;line-height:30px;color:#008000;font-size:14px;">负</div>
<div class="c" style="left:917px;top:364px;width:42px;height:30px;line-height:30px;color:#008000;font-size:14px;">输</div>
<div class="c" style="left:960px;top:364px;width:61px;height:30px;line-height:30px;color:#008000;font-size:14px;">小</div>
<div style="left:0px;top:395px;width:80px;height:30px;background:#12a5a8;"></div>
<div style="left:81px;top:395px;width:78px;height:30px;background:#efefef;"></div>
<div style="left:160px;top:395px;width:119px;height:30px;background:#efefef;"></div>
<div style="left:280px;top:395px;width:94px;height:30px;background:#efefef;"></div>
<div style="left:375px;top:395px;width:42px;height:30px;background:#efefef;"></div>
<div style="left:418px;top:395px;width:100px;height:30px;background:#efefef;"></div>
<div style="left:519px;top:395px;width:44px;height:30px;background:#fdf9f5;"></div>
<div style="left:564px;top:395px;width:67px;height:30px;background:#fdf9f5;"></div>
<div style="left:632px;top:395px;width:45px;height:30px;background:#fdf9f5;"></div>
<div style="left:678px;top:395px;width:64px;height:30px;background:#eff6fa;"></div>
<div style="left:743px;top:395px;width:65px;height:30px;background:#eff6fa;"></div>
<div style="left:809px;top:395px;width:65px;height:30px;background:#eff6fa;"></div>
<div style="left:875px;top:395px;width:41px;height:30px;background:#efefef;"></div>
<div style="left:917px;top:395px;width:42px;height:30px;background:#efefef;"></div>
<div style="left:960px;top:395px;width:61px;height:30px;background:#efefef;"></div>
<div class="c" style="left:0px;top:396px;width:80px;height:30px;line-height:30px;color:#fff;font-size:14px;">球会友谊</div>
<div class="c" style="left:81px;top:396px;width:78px;height:30px;line-height:30px;color:#000;font-size:14px;">25-08-07</div>
<div class="c" style="left:160px;top:396px;width:119px;height:30px;line-height:30px;color:#000;font-size:14px;">皇家阿维勒斯</div>
<div class="c" style="left:280px;top:396px;width:94px;height:30px;line-height:30px;color:#000;font-size:14px;"><span style="color:#ff0000">2-2</span>(1-2)</div>
<div class="c" style="left:375px;top:396px;width:42px;height:30px;line-height:30px;color:#000;font-size:14px;">6-6</div>
<div class="c" style="left:418px;top:396px;width:100px;height:30px;line-height:30px;color:#008000;font-size:14px;">利安尼沙</div>
<div class="c" style="left:519px;top:396px;width:44px;height:30px;line-height:30px;color:#000;font-size:14px;"></div>
<div class="c" style="left:564px;top:396px;width:67px;height:30px;line-height:30px;color:#000;font-size:14px;"></div>
<div class="c" style="left:632px;top:396px;width:45px;height:30px;line-height:30px;color:#000;font-size:14px;"></div>
<div class="c" style="left:678px;top:396px;width:64px;height:30px;line-height:30px;color:#000;font-size:14px;">2.21</div>
<div class="c" style="left:743px;top:396px;width:65px;height:30px;line-height:30px;color:#000;font-size:14px;">3.41</div>
<div class="c" style="left:809px;top:396px;width:65px;height:30px;line-height:30px;color:#000;font-size:14px;">2.84</div>
<div class="c" style="left:875px;top:396px;width:41px;height:30px;line-height:30px;color:#0000ff;font-size:14px;">平</div>
<div class="c" style="left:917px;top:396px;width:42px;height:30px;line-height:30px;color:#000;font-size:14px;"></div>
<div class="c" style="left:960px;top:396px;width:61px;height:30px;line-height:30px;color:#000;font-size:14px;"></div>
<div style="left:0px;top:143px;width:1022px;height:1px;background:#bcbcbc;"></div>
<div style="left:0px;top:174px;width:1022px;height:1px;background:#bcbcbc;"></div>
<div style="left:0px;top:206px;width:1022px;height:1px;background:#bcbcbc;"></div>
<div style="left:0px;top:237px;width:1022px;height:1px;background:#bcbcbc;"></div>
<div style="left:0px;top:269px;width:1022px;height:1px;background:#bcbcbc;"></div>
<div style="left:0px;top:300px;width:1022px;height:1px;background:#bcbcbc;"></div>
<div style="left:0px;top:331px;width:1022px;height:1px;background:#bcbcbc;"></div>
<div style="left:0px;top:363px;width:1022px;height:1px;background:#bcbcbc;"></div>
<div style="left:0px;top:394px;width:1022px;height:1px;background:#bcbcbc;"></div>
<div style="left:0px;top:425px;width:1022px;height:1px;background:#bcbcbc;"></div>
<div style="left:80px;top:112px;width:1px;height:32px;background:#bcbcbc;"></div>
<div style="left:159px;top:112px;width:1px;height:32px;background:#bcbcbc;"></div>
<div style="left:279px;top:112px;width:1px;height:32px;background:#bcbcbc;"></div>
<div style="left:374px;top:112px;width:1px;height:32px;background:#bcbcbc;"></div>
<div style="left:417px;top:112px;width:1px;height:32px;background:#bcbcbc;"></div>
<div style="left:518px;top:112px;width:1px;height:32px;background:#bcbcbc;"></div>
<div style="left:563px;top:112px;width:1px;height:32px;background:#bcbcbc;"></div>
<div style="left:631px;top:112px;width:1px;height:32px;background:#bcbcbc;"></div>
<div style="left:677px;top:112px;width:1px;height:32px;background:#bcbcbc;"></div>
<div style="left:742px;top:112px;width:1px;height:32px;background:#bcbcbc;"></div>
<div style="left:808px;top:112px;width:1px;height:32px;background:#bcbcbc;"></div>
<div style="left:874px;top:112px;width:1px;height:32px;background:#bcbcbc;"></div>
<div style="left:916px;top:112px;width:1px;height:32px;background:#bcbcbc;"></div>
<div style="left:959px;top:112px;width:1px;height:32px;background:#bcbcbc;"></div>
<div style="left:1021px;top:112px;width:1px;height:32px;background:#bcbcbc;"></div>
<div style="left:80px;top:143px;width:1px;height:32px;background:#bcbcbc;"></div>
<div style="left:159px;top:143px;width:1px;height:32px;background:#bcbcbc;"></div>
<div style="left:279px;top:143px;width:1px;height:32px;background:#bcbcbc;"></div>
<div style="left:374px;top:143px;width:1px;height:32px;background:#bcbcbc;"></div>
<div style="left:417px;top:143px;width:1px;height:32px;background:#bcbcbc;"></div>
<div style="left:518px;top:143px;width:1px;height:32px;background:#bcbcbc;"></div>
<div style="left:563px;top:143px;width:1px;height:32px;background:#bcbcbc;"></div>
<div style="left:631px;top:143px;width:1px;height:32px;background:#bcbcbc;"></div>
<div style="left:677px;top:143px;width:1px;height:32px;background:#bcbcbc;"></div>
<div style="left:742px;top:143px;width:1px;height:32px;background:#bcbcbc;"></div>
<div style="left:808px;top:143px;width:1px;height:32px;background:#bcbcbc;"></div>
<div style="left:874px;top:143px;width:1px;height:32px;background:#bcbcbc;"></div>
<div style="left:916px;top:143px;width:1px;height:32px;background:#bcbcbc;"></div>
<div style="left:959px;top:143px;width:1px;height:32px;background:#bcbcbc;"></div>
<div style="left:1021px;top:143px;width:1px;height:32px;background:#bcbcbc;"></div>
<div style="left:80px;top:174px;width:1px;height:33px;background:#bcbcbc;"></div>
<div style="left:159px;top:174px;width:1px;height:33px;background:#bcbcbc;"></div>
<div style="left:279px;top:174px;width:1px;height:33px;background:#bcbcbc;"></div>
<div style="left:374px;top:174px;width:1px;height:33px;background:#bcbcbc;"></div>
<div style="left:417px;top:174px;width:1px;height:33px;background:#bcbcbc;"></div>
<div style="left:518px;top:174px;width:1px;height:33px;background:#bcbcbc;"></div>
<div style="left:563px;top:174px;width:1px;height:33px;background:#bcbcbc;"></div>
<div style="left:631px;top:174px;width:1px;height:33px;background:#bcbcbc;"></div>
<div style="left:677px;top:174px;width:1px;height:33px;background:#bcbcbc;"></div>
<div style="left:742px;top:174px;width:1px;height:33px;background:#bcbcbc;"></div>
<div style="left:808px;top:174px;width:1px;height:33px;background:#bcbcbc;"></div>
<div style="left:874px;top:174px;width:1px;height:33px;background:#bcbcbc;"></div>
<div style="left:916px;top:174px;width:1px;height:33px;background:#bcbcbc;"></div>
<div style="left:959px;top:174px;width:1px;height:33px;background:#bcbcbc;"></div>
<div style="left:1021px;top:174px;width:1px;height:33px;background:#bcbcbc;"></div>
<div style="left:80px;top:206px;width:1px;height:32px;background:#bcbcbc;"></div>
<div style="left:159px;top:206px;width:1px;height:32px;background:#bcbcbc;"></div>
<div style="left:279px;top:206px;width:1px;height:32px;background:#bcbcbc;"></div>
<div style="left:374px;top:206px;width:1px;height:32px;background:#bcbcbc;"></div>
<div style="left:417px;top:206px;width:1px;height:32px;background:#bcbcbc;"></div>
<div style="left:518px;top:206px;width:1px;height:32px;background:#bcbcbc;"></div>
<div style="left:563px;top:206px;width:1px;height:32px;background:#bcbcbc;"></div>
<div style="left:631px;top:206px;width:1px;height:32px;background:#bcbcbc;"></div>
<div style="left:677px;top:206px;width:1px;height:32px;background:#bcbcbc;"></div>
<div style="left:742px;top:206px;width:1px;height:32px;background:#bcbcbc;"></div>
<div style="left:808px;top:206px;width:1px;height:32px;background:#bcbcbc;"></div>
<div style="left:874px;top:206px;width:1px;height:32px;background:#bcbcbc;"></div>
<div style="left:916px;top:206px;width:1px;height:32px;background:#bcbcbc;"></div>
<div style="left:959px;top:206px;width:1px;height:32px;background:#bcbcbc;"></div>
<div style="left:1021px;top:206px;width:1px;height:32px;background:#bcbcbc;"></div>
<div style="left:80px;top:237px;width:1px;height:33px;background:#bcbcbc;"></div>
<div style="left:159px;top:237px;width:1px;height:33px;background:#bcbcbc;"></div>
<div style="left:279px;top:237px;width:1px;height:33px;background:#bcbcbc;"></div>
<div style="left:374px;top:237px;width:1px;height:33px;background:#bcbcbc;"></div>
<div style="left:417px;top:237px;width:1px;height:33px;background:#bcbcbc;"></div>
<div style="left:518px;top:237px;width:1px;height:33px;background:#bcbcbc;"></div>
<div style="left:563px;top:237px;width:1px;height:33px;background:#bcbcbc;"></div>
<div style="left:631px;top:237px;width:1px;height:33px;background:#bcbcbc;"></div>
<div style="left:677px;top:237px;width:1px;height:33px;background:#bcbcbc;"></div>
<div style="left:742px;top:237px;width:1px;height:33px;background:#bcbcbc;"></div>
<div style="left:808px;top:237px;width:1px;height:33px;background:#bcbcbc;"></div>
<div style="left:874px;top:237px;width:1px;height:33px;background:#bcbcbc;"></div>
<div style="left:916px;top:237px;width:1px;height:33px;background:#bcbcbc;"></div>
<div style="left:959px;top:237px;width:1px;height:33px;background:#bcbcbc;"></div>
<div style="left:1021px;top:237px;width:1px;height:33px;background:#bcbcbc;"></div>
<div style="left:80px;top:269px;width:1px;height:32px;background:#bcbcbc;"></div>
<div style="left:159px;top:269px;width:1px;height:32px;background:#bcbcbc;"></div>
<div style="left:279px;top:269px;width:1px;height:32px;background:#bcbcbc;"></div>
<div style="left:374px;top:269px;width:1px;height:32px;background:#bcbcbc;"></div>
<div style="left:417px;top:269px;width:1px;height:32px;background:#bcbcbc;"></div>
<div style="left:518px;top:269px;width:1px;height:32px;background:#bcbcbc;"></div>
<div style="left:563px;top:269px;width:1px;height:32px;background:#bcbcbc;"></div>
<div style="left:631px;top:269px;width:1px;height:32px;background:#bcbcbc;"></div>
<div style="left:677px;top:269px;width:1px;height:32px;background:#bcbcbc;"></div>
<div style="left:742px;top:269px;width:1px;height:32px;background:#bcbcbc;"></div>
<div style="left:808px;top:269px;width:1px;height:32px;background:#bcbcbc;"></div>
<div style="left:874px;top:269px;width:1px;height:32px;background:#bcbcbc;"></div>
<div style="left:916px;top:269px;width:1px;height:32px;background:#bcbcbc;"></div>
<div style="left:959px;top:269px;width:1px;height:32px;background:#bcbcbc;"></div>
<div style="left:1021px;top:269px;width:1px;height:32px;background:#bcbcbc;"></div>
<div style="left:80px;top:300px;width:1px;height:32px;background:#bcbcbc;"></div>
<div style="left:159px;top:300px;width:1px;height:32px;background:#bcbcbc;"></div>
<div style="left:279px;top:300px;width:1px;height:32px;background:#bcbcbc;"></div>
<div style="left:374px;top:300px;width:1px;height:32px;background:#bcbcbc;"></div>
<div style="left:417px;top:300px;width:1px;height:32px;background:#bcbcbc;"></div>
<div style="left:518px;top:300px;width:1px;height:32px;background:#bcbcbc;"></div>
<div style="left:563px;top:300px;width:1px;height:32px;background:#bcbcbc;"></div>
<div style="left:631px;top:300px;width:1px;height:32px;background:#bcbcbc;"></div>
<div style="left:677px;top:300px;width:1px;height:32px;background:#bcbcbc;"></div>
<div style="left:742px;top:300px;width:1px;height:32px;background:#bcbcbc;"></div>
<div style="left:808px;top:300px;width:1px;height:32px;background:#bcbcbc;"></div>
<div style="left:874px;top:300px;width:1px;height:32px;background:#bcbcbc;"></div>
<div style="left:916px;top:300px;width:1px;height:32px;background:#bcbcbc;"></div>
<div style="left:959px;top:300px;width:1px;height:32px;background:#bcbcbc;"></div>
<div style="left:1021px;top:300px;width:1px;height:32px;background:#bcbcbc;"></div>
<div style="left:80px;top:331px;width:1px;height:33px;background:#bcbcbc;"></div>
<div style="left:159px;top:331px;width:1px;height:33px;background:#bcbcbc;"></div>
<div style="left:279px;top:331px;width:1px;height:33px;background:#bcbcbc;"></div>
<div style="left:374px;top:331px;width:1px;height:33px;background:#bcbcbc;"></div>
<div style="left:417px;top:331px;width:1px;height:33px;background:#bcbcbc;"></div>
<div style="left:518px;top:331px;width:1px;height:33px;background:#bcbcbc;"></div>
<div style="left:563px;top:331px;width:1px;height:33px;background:#bcbcbc;"></div>
<div style="left:631px;top:331px;width:1px;height:33px;background:#bcbcbc;"></div>
<div style="left:677px;top:331px;width:1px;height:33px;background:#bcbcbc;"></div>
<div style="left:742px;top:331px;width:1px;height:33px;background:#bcbcbc;"></div>
<div style="left:808px;top:331px;width:1px;height:33px;background:#bcbcbc;"></div>
<div style="left:874px;top:331px;width:1px;height:33px;background:#bcbcbc;"></div>
<div style="left:916px;top:331px;width:1px;height:33px;background:#bcbcbc;"></div>
<div style="left:959px;top:331px;width:1px;height:33px;background:#bcbcbc;"></div>
<div style="left:1021px;top:331px;width:1px;height:33px;background:#bcbcbc;"></div>
<div style="left:80px;top:363px;width:1px;height:32px;background:#bcbcbc;"></div>
<div style="left:159px;top:363px;width:1px;height:32px;background:#bcbcbc;"></div>
<div style="left:279px;top:363px;width:1px;height:32px;background:#bcbcbc;"></div>
<div style="left:374px;top:363px;width:1px;height:32px;background:#bcbcbc;"></div>
<div style="left:417px;top:363px;width:1px;height:32px;background:#bcbcbc;"></div>
<div style="left:518px;top:363px;width:1px;height:32px;background:#bcbcbc;"></div>
<div style="left:563px;top:363px;width:1px;height:32px;background:#bcbcbc;"></div>
<div style="left:631px;top:363px;width:1px;height:32px;background:#bcbcbc;"></div>
<div style="left:677px;top:363px;width:1px;height:32px;background:#bcbcbc;"></div>
<div style="left:742px;top:363px;width:1px;height:32px;background:#bcbcbc;"></div>
<div style="left:808px;top:363px;width:1px;height:32px;background:#bcbcbc;"></div>
<div style="left:874px;top:363px;width:1px;height:32px;background:#bcbcbc;"></div>
<div style="left:916px;top:363px;width:1px;height:32px;background:#bcbcbc;"></div>
<div style="left:959px;top:363px;width:1px;height:32px;background:#bcbcbc;"></div>
<div style="left:1021px;top:363px;width:1px;height:32px;background:#bcbcbc;"></div>
<div style="left:80px;top:394px;width:1px;height:32px;background:#bcbcbc;"></div>
<div style="left:159px;top:394px;width:1px;height:32px;background:#bcbcbc;"></div>
<div style="left:279px;top:394px;width:1px;height:32px;background:#bcbcbc;"></div>
<div style="left:374px;top:394px;width:1px;height:32px;background:#bcbcbc;"></div>
<div style="left:417px;top:394px;width:1px;height:32px;background:#bcbcbc;"></div>
<div style="left:518px;top:394px;width:1px;height:32px;background:#bcbcbc;"></div>
<div style="left:563px;top:394px;width:1px;height:32px;background:#bcbcbc;"></div>
<div style="left:631px;top:394px;width:1px;height:32px;background:#bcbcbc;"></div>
<div style="left:677px;top:394px;width:1px;height:32px;background:#bcbcbc;"></div>
<div style="left:742px;top:394px;width:1px;height:32px;background:#bcbcbc;"></div>
<div style="left:808px;top:394px;width:1px;height:32px;background:#bcbcbc;"></div>
<div style="left:874px;top:394px;width:1px;height:32px;background:#bcbcbc;"></div>
<div style="left:916px;top:394px;width:1px;height:32px;background:#bcbcbc;"></div>
<div style="left:959px;top:394px;width:1px;height:32px;background:#bcbcbc;"></div>
<div style="left:1021px;top:394px;width:1px;height:32px;background:#bcbcbc;"></div>
<div style="left:1021px;top:425px;width:1px;height:32px;background:#bcbcbc;"></div>
<div class="sum" style="left:313px;top:426px;height:31px;line-height:31px;">近<span style="color:#f00">10</span>场,胜3平2负5, 胜率:<span class="pct">30%</span> 赢率:<span style="color:#00f">33.3%</span> 大:<span style="color:#00f">33.3%</span> 单率:<span style="color:#00f">50%</span></div>
<div style="left:0px;top:457px;width:1022px;height:29px;background:#dce3ed;"></div>
<div style="left:0px;top:457px;width:1022px;height:1px;background:#bcbcbc;"></div>
<div class="c" style="left:21px;top:461px;width:179px;height:29px;line-height:29px;color:#333;font-size:14px;font-weight:bold;text-align:left;justify-content:flex-start;-webkit-text-stroke:0.15px #333;">阿尔巴塞特</div>
<div style="left:0px;top:486px;width:1022px;height:45px;background:#dce3ed;"></div>
<div style="left:0px;top:486px;width:1022px;height:1px;background:#bcbcbc;"></div>
<div style="left:519px;top:511px;width:502px;height:1px;background:#bcbcbc;"></div>
<div style="left:0px;top:531px;width:1022px;height:1px;background:#bcbcbc;"></div>
<div style="left:80px;top:486px;width:1px;height:45px;background:#bcbcbc;"></div>
<div style="left:158px;top:486px;width:1px;height:45px;background:#bcbcbc;"></div>
<div style="left:270px;top:486px;width:1px;height:45px;background:#bcbcbc;"></div>
<div style="left:365px;top:486px;width:1px;height:45px;background:#bcbcbc;"></div>
<div style="left:408px;top:486px;width:1px;height:45px;background:#bcbcbc;"></div>
<div style="left:519px;top:486px;width:1px;height:45px;background:#bcbcbc;"></div>
<div style="left:568px;top:511px;width:1px;height:20px;background:#bcbcbc;"></div>
<div style="left:628px;top:511px;width:1px;height:20px;background:#bcbcbc;"></div>
<div style="left:677px;top:486px;width:1px;height:45px;background:#bcbcbc;"></div>
<div style="left:743px;top:511px;width:1px;height:20px;background:#bcbcbc;"></div>
<div style="left:808px;top:511px;width:1px;height:20px;background:#bcbcbc;"></div>
<div style="left:874px;top:486px;width:1px;height:45px;background:#bcbcbc;"></div>
<div style="left:917px;top:511px;width:1px;height:20px;background:#bcbcbc;"></div>
<div style="left:959px;top:511px;width:1px;height:20px;background:#bcbcbc;"></div>
<div style="left:1021px;top:486px;width:1px;height:45px;background:#bcbcbc;"></div>
<div class="c" style="left:0px;top:488px;width:80px;height:44px;line-height:44px;color:#222;font-size:14px;">类型</div>
<div class="c" style="left:81px;top:488px;width:77px;height:44px;line-height:44px;color:#222;font-size:14px;">日期</div>
<div class="c" style="left:159px;top:488px;width:111px;height:44px;line-height:44px;color:#222;font-size:14px;">主场</div>
<div class="c" style="left:271px;top:488px;width:94px;height:44px;line-height:44px;color:#222;font-size:14px;">比分(半场)</div>
<div class="c" style="left:366px;top:488px;width:42px;height:44px;line-height:44px;color:#222;font-size:14px;">角球</div>
<div class="c" style="left:409px;top:488px;width:110px;height:44px;line-height:44px;color:#222;font-size:14px;">客场</div>
<div class="c" style="left:520px;top:513px;width:48px;height:19px;line-height:19px;color:#222;font-size:14px;">主</div>
<div class="c" style="left:569px;top:513px;width:59px;height:19px;line-height:19px;color:#222;font-size:14px;">盘口</div>
<div class="c" style="left:629px;top:513px;width:48px;height:19px;line-height:19px;color:#222;font-size:14px;">客</div>
<div class="c" style="left:678px;top:513px;width:65px;height:19px;line-height:19px;color:#222;font-size:14px;">主</div>
<div class="c" style="left:744px;top:513px;width:64px;height:19px;line-height:19px;color:#222;font-size:14px;">和</div>
<div class="c" style="left:809px;top:513px;width:65px;height:19px;line-height:19px;color:#222;font-size:14px;">客</div>
<div class="c" style="left:875px;top:513px;width:42px;height:19px;line-height:19px;color:#222;font-size:14px;">胜负</div>
<div class="c" style="left:918px;top:513px;width:41px;height:19px;line-height:19px;color:#222;font-size:14px;">让球</div>
<div class="c" style="left:960px;top:513px;width:61px;height:19px;line-height:19px;color:#222;font-size:14px;">进球数</div>
<div class="sel" style="left:542px;top:488px;width:63px;height:20px;"><span style="position:absolute;left:3px;top:0;line-height:20px;font-size:14px">Crow*</span><svg style="position:absolute;left:49px;top:7px" width="10" height="6" viewBox="0 0 10 6"><path d="M1 1 L5.0 5 L9 1" fill="none" stroke="#111" stroke-width="2.3" stroke-linecap="round" stroke-linejoin="round"/></svg></div>
<div class="sel" style="left:616px;top:488px;width:37px;height:20px;"><span style="position:absolute;left:3px;top:0;line-height:20px;font-size:14px">终</span><svg style="position:absolute;left:23px;top:7px" width="10" height="6" viewBox="0 0 10 6"><path d="M1 1 L5.0 5 L9 1" fill="none" stroke="#111" stroke-width="2.3" stroke-linecap="round" stroke-linejoin="round"/></svg></div>
<div class="sel" style="left:706px;top:488px;width:91px;height:20px;"><span style="position:absolute;left:3px;top:0;line-height:20px;font-size:14px">胜平负均值</span><svg style="position:absolute;left:77px;top:7px" width="10" height="6" viewBox="0 0 10 6"><path d="M1 1 L5.0 5 L9 1" fill="none" stroke="#111" stroke-width="2.3" stroke-linecap="round" stroke-linejoin="round"/></svg></div>
<div class="sel" style="left:807px;top:488px;width:37px;height:20px;"><span style="position:absolute;left:3px;top:0;line-height:20px;font-size:14px">终</span><svg style="position:absolute;left:23px;top:7px" width="10" height="6" viewBox="0 0 10 6"><path d="M1 1 L5.0 5 L9 1" fill="none" stroke="#111" stroke-width="2.3" stroke-linecap="round" stroke-linejoin="round"/></svg></div>
<div class="sel" style="left:922px;top:488px;width:50px;height:20px;"><span style="position:absolute;left:3px;top:0;line-height:20px;font-size:14px">全场</span><svg style="position:absolute;left:36px;top:7px" width="10" height="6" viewBox="0 0 10 6"><path d="M1 1 L5.0 5 L9 1" fill="none" stroke="#111" stroke-width="2.3" stroke-linecap="round" stroke-linejoin="round"/></svg></div>
<div style="left:0px;top:532px;width:80px;height:31px;background:#408a10;"></div>
<div style="left:81px;top:532px;width:77px;height:31px;background:#fff;"></div>
<div style="left:159px;top:532px;width:111px;height:31px;background:#fff;"></div>
<div style="left:271px;top:532px;width:94px;height:31px;background:#fff;"></div>
<div style="left:366px;top:532px;width:42px;height:31px;background:#fff;"></div>
<div style="left:409px;top:532px;width:110px;height:31px;background:#fff;"></div>
<div style="left:520px;top:532px;width:48px;height:31px;background:#fdf9f5;"></div>
<div style="left:569px;top:532px;width:59px;height:31px;background:#fdf9f5;"></div>
<div style="left:629px;top:532px;width:48px;height:31px;background:#fdf9f5;"></div>
<div style="left:678px;top:532px;width:65px;height:31px;background:#eff6fa;"></div>
<div style="left:744px;top:532px;width:64px;height:31px;background:#eff6fa;"></div>
<div style="left:809px;top:532px;width:65px;height:31px;background:#eff6fa;"></div>
<div style="left:875px;top:532px;width:42px;height:31px;background:#fff;"></div>
<div style="left:918px;top:532px;width:41px;height:31px;background:#fff;"></div>
<div style="left:960px;top:532px;width:61px;height:31px;background:#fff;"></div>
<div class="c" style="left:0px;top:533px;width:80px;height:30px;line-height:30px;color:#fff;font-size:14px;">西乙</div>
<div class="c" style="left:81px;top:533px;width:77px;height:30px;line-height:30px;color:#000;font-size:14px;">25-09-29</div>
<div class="c" style="left:159px;top:533px;width:111px;height:30px;line-height:30px;color:#000;font-size:14px;">希洪竞技</div>
<div class="c" style="left:271px;top:533px;width:94px;height:30px;line-height:30px;color:#000;font-size:14px;"><span style="color:#ff0000">3-4</span>(3-1)</div>
<div class="c" style="left:366px;top:533px;width:42px;height:30px;line-height:30px;color:#000;font-size:14px;">2-8</div>
<div class="c" style="left:409px;top:533px;width:110px;height:30px;line-height:30px;color:#008000;font-size:14px;">阿尔巴塞特</div>
<div class="c" style="left:520px;top:533px;width:48px;height:30px;line-height:30px;color:#000;font-size:14px;">0.94</div>
<div class="c" style="left:569px;top:533px;width:59px;height:30px;line-height:30px;color:#000;font-size:14px;">半球</div>
<div class="c" style="left:629px;top:533px;width:48px;height:30px;line-height:30px;color:#000;font-size:14px;">0.94</div>
<div class="c" style="left:678px;top:533px;width:65px;height:30px;line-height:30px;color:#000;font-size:14px;">1.94</div>
<div class="c" style="left:744px;top:533px;width:64px;height:30px;line-height:30px;color:#000;font-size:14px;">3.47</div>
<div class="c" style="left:809px;top:533px;width:65px;height:30px;line-height:30px;color:#000;font-size:14px;">3.67</div>
<div class="c" style="left:875px;top:533px;width:42px;height:30px;line-height:30px;color:#ff0000;font-size:14px;">胜</div>
<div class="c" style="left:918px;top:533px;width:41px;height:30px;line-height:30px;color:#ff0000;font-size:14px;">赢</div>
<div class="c" style="left:960px;top:533px;width:61px;height:30px;line-height:30px;color:#ff0000;font-size:14px;">大</div>
<div style="left:0px;top:564px;width:80px;height:30px;background:#408a10;"></div>
<div style="left:81px;top:564px;width:77px;height:30px;background:#efefef;"></div>
<div style="left:159px;top:564px;width:111px;height:30px;background:#efefef;"></div>
<div style="left:271px;top:564px;width:94px;height:30px;background:#efefef;"></div>
<div style="left:366px;top:564px;width:42px;height:30px;background:#efefef;"></div>
<div style="left:409px;top:564px;width:110px;height:30px;background:#efefef;"></div>
<div style="left:520px;top:564px;width:48px;height:30px;background:#fdf9f5;"></div>
<div style="left:569px;top:564px;width:59px;height:30px;background:#fdf9f5;"></div>
<div style="left:629px;top:564px;width:48px;height:30px;background:#fdf9f5;"></div>
<div style="left:678px;top:564px;width:65px;height:30px;background:#eff6fa;"></div>
<div style="left:744px;top:564px;width:64px;height:30px;background:#eff6fa;"></div>
<div style="left:809px;top:564px;width:65px;height:30px;background:#eff6fa;"></div>
<div style="left:875px;top:564px;width:42px;height:30px;background:#efefef;"></div>
<div style="left:918px;top:564px;width:41px;height:30px;background:#efefef;"></div>
<div style="left:960px;top:564px;width:61px;height:30px;background:#efefef;"></div>
<div class="c" style="left:0px;top:564px;width:80px;height:30px;line-height:30px;color:#fff;font-size:14px;">西乙</div>
<div class="c" style="left:81px;top:564px;width:77px;height:30px;line-height:30px;color:#000;font-size:14px;">25-09-21</div>
<div class="c" style="left:159px;top:564px;width:111px;height:30px;line-height:30px;color:#008000;font-size:14px;">阿尔巴塞特</div>
<div class="c" style="left:271px;top:564px;width:94px;height:30px;line-height:30px;color:#000;font-size:14px;"><span style="color:#ff0000">2-0</span>(0-0)</div>
<div class="c" style="left:366px;top:564px;width:42px;height:30px;line-height:30px;color:#000;font-size:14px;">2-6</div>
<div class="c" style="left:409px;top:564px;width:110px;height:30px;line-height:30px;color:#000;font-size:14px;">巴拉多利德</div>
<div class="c" style="left:520px;top:564px;width:48px;height:30px;line-height:30px;color:#000;font-size:14px;">0.93</div>
<div class="c" style="left:569px;top:564px;width:59px;height:30px;line-height:30px;color:#000;font-size:14px;">平手</div>
<div class="c" style="left:629px;top:564px;width:48px;height:30px;line-height:30px;color:#000;font-size:14px;">0.95</div>
<div class="c" style="left:678px;top:564px;width:65px;height:30px;line-height:30px;color:#000;font-size:14px;">2.61</div>
<div class="c" style="left:744px;top:564px;width:64px;height:30px;line-height:30px;color:#000;font-size:14px;">3.29</div>
<div class="c" style="left:809px;top:564px;width:65px;height:30px;line-height:30px;color:#000;font-size:14px;">2.56</div>
<div class="c" style="left:875px;top:564px;width:42px;height:30px;line-height:30px;color:#ff0000;font-size:14px;">胜</div>
<div class="c" style="left:918px;top:564px;width:41px;height:30px;line-height:30px;color:#ff0000;font-size:14px;">赢</div>
<div class="c" style="left:960px;top:564px;width:61px;height:30px;line-height:30px;color:#008000;font-size:14px;">小</div>
<div style="left:0px;top:595px;width:80px;height:31px;background:#408a10;"></div>
<div style="left:81px;top:595px;width:77px;height:31px;background:#fff;"></div>
<div style="left:159px;top:595px;width:111px;height:31px;background:#fff;"></div>
<div style="left:271px;top:595px;width:94px;height:31px;background:#fff;"></div>
<div style="left:366px;top:595px;width:42px;height:31px;background:#fff;"></div>
<div style="left:409px;top:595px;width:110px;height:31px;background:#fff;"></div>
<div style="left:520px;top:595px;width:48px;height:31px;background:#fdf9f5;"></div>
<div style="left:569px;top:595px;width:59px;height:31px;background:#fdf9f5;"></div>
<div style="left:629px;top:595px;width:48px;height:31px;background:#fdf9f5;"></div>
<div style="left:678px;top:595px;width:65px;height:31px;background:#eff6fa;"></div>
<div style="left:744px;top:595px;width:64px;height:31px;background:#eff6fa;"></div>
<div style="left:809px;top:595px;width:65px;height:31px;background:#eff6fa;"></div>
<div style="left:875px;top:595px;width:42px;height:31px;background:#fff;"></div>
<div style="left:918px;top:595px;width:41px;height:31px;background:#fff;"></div>
<div style="left:960px;top:595px;width:61px;height:31px;background:#fff;"></div>
<div class="c" style="left:0px;top:596px;width:80px;height:30px;line-height:30px;color:#fff;font-size:14px;">西乙</div>
<div class="c" style="left:81px;top:596px;width:77px;height:30px;line-height:30px;color:#000;font-size:14px;">25-09-16</div>
<div class="c" style="left:159px;top:596px;width:111px;height:30px;line-height:30px;color:#000;font-size:14px;">萨拉戈萨</div>
<div class="c" style="left:271px;top:596px;width:94px;height:30px;line-height:30px;color:#000;font-size:14px;"><span style="color:#ff0000">0-0</span>(0-0)</div>
<div class="c" style="left:366px;top:596px;width:42px;height:30px;line-height:30px;color:#000;font-size:14px;">3-6</div>
<div class="c" style="left:409px;top:596px;width:110px;height:30px;line-height:30px;color:#008000;font-size:14px;">阿尔巴塞特</div>
<div class="c" style="left:520px;top:596px;width:48px;height:30px;line-height:30px;color:#000;font-size:14px;">1.07</div>
<div class="c" style="left:569px;top:596px;width:59px;height:30px;line-height:30px;color:#000;font-size:14px;">平/半</div>
<div class="c" style="left:629px;top:596px;width:48px;height:30px;line-height:30px;color:#000;font-size:14px;">0.82</div>
<div class="c" style="left:678px;top:596px;width:65px;height:30px;line-height:30px;color:#000;font-size:14px;">2.28</div>
<div class="c" style="left:744px;top:596px;width:64px;height:30px;line-height:30px;color:#000;font-size:14px;">3.18</div>
<div class="c" style="left:809px;top:596px;width:65px;height:30px;line-height:30px;color:#000;font-size:14px;">3.10</div>
<div class="c" style="left:875px;top:596px;width:42px;height:30px;line-height:30px;color:#0000ff;font-size:14px;">平</div>
<div class="c" style="left:918px;top:596px;width:41px;height:30px;line-height:30px;color:#ff0000;font-size:14px;">赢</div>
<div class="c" style="left:960px;top:596px;width:61px;height:30px;line-height:30px;color:#008000;font-size:14px;">小</div>
<div style="left:0px;top:627px;width:80px;height:30px;background:#12a5a8;"></div>
<div style="left:81px;top:627px;width:77px;height:30px;background:#efefef;"></div>
<div style="left:159px;top:627px;width:111px;height:30px;background:#efefef;"></div>
<div style="left:271px;top:627px;width:94px;height:30px;background:#efefef;"></div>
<div style="left:366px;top:627px;width:42px;height:30px;background:#efefef;"></div>
<div style="left:409px;top:627px;width:110px;height:30px;background:#efefef;"></div>
<div style="left:520px;top:627px;width:48px;height:30px;background:#fdf9f5;"></div>
<div style="left:569px;top:627px;width:59px;height:30px;background:#fdf9f5;"></div>
<div style="left:629px;top:627px;width:48px;height:30px;background:#fdf9f5;"></div>
<div style="left:678px;top:627px;width:65px;height:30px;background:#eff6fa;"></div>
<div style="left:744px;top:627px;width:64px;height:30px;background:#eff6fa;"></div>
<div style="left:809px;top:627px;width:65px;height:30px;background:#eff6fa;"></div>
<div style="left:875px;top:627px;width:42px;height:30px;background:#efefef;"></div>
<div style="left:918px;top:627px;width:41px;height:30px;background:#efefef;"></div>
<div style="left:960px;top:627px;width:61px;height:30px;background:#efefef;"></div>
<div class="c" style="left:0px;top:627px;width:80px;height:30px;line-height:30px;color:#fff;font-size:14px;">球会友谊</div>
<div class="c" style="left:81px;top:627px;width:77px;height:30px;line-height:30px;color:#000;font-size:14px;">25-09-11</div>
<div class="c" style="left:159px;top:627px;width:111px;height:30px;line-height:30px;color:#008000;font-size:14px;">阿尔巴塞特</div>
<div class="c" style="left:271px;top:627px;width:94px;height:30px;line-height:30px;color:#000;font-size:14px;"><span style="color:#ff0000">4-0</span>(3-0)</div>
<div class="c" style="left:366px;top:627px;width:42px;height:30px;line-height:30px;color:#000;font-size:14px;"></div>
<div class="c" style="left:409px;top:627px;width:110px;height:30px;line-height:30px;color:#000;font-size:14px;">昆坦拿</div>
<div class="c" style="left:520px;top:627px;width:48px;height:30px;line-height:30px;color:#000;font-size:14px;"></div>
<div class="c" style="left:569px;top:627px;width:59px;height:30px;line-height:30px;color:#000;font-size:14px;"></div>
<div class="c" style="left:629px;top:627px;width:48px;height:30px;line-height:30px;color:#000;font-size:14px;"></div>
<div class="c" style="left:678px;top:627px;width:65px;height:30px;line-height:30px;color:#000;font-size:14px;"></div>
<div class="c" style="left:744px;top:627px;width:64px;height:30px;line-height:30px;color:#000;font-size:14px;"></div>
<div class="c" style="left:809px;top:627px;width:65px;height:30px;line-height:30px;color:#000;font-size:14px;"></div>
<div class="c" style="left:875px;top:627px;width:42px;height:30px;line-height:30px;color:#ff0000;font-size:14px;">胜</div>
<div class="c" style="left:918px;top:627px;width:41px;height:30px;line-height:30px;color:#000;font-size:14px;"></div>
<div class="c" style="left:960px;top:627px;width:61px;height:30px;line-height:30px;color:#000;font-size:14px;"></div>
<div style="left:0px;top:658px;width:80px;height:30px;background:#408a10;"></div>
<div style="left:81px;top:658px;width:77px;height:30px;background:#fff;"></div>
<div style="left:159px;top:658px;width:111px;height:30px;background:#fff;"></div>
<div style="left:271px;top:658px;width:94px;height:30px;background:#fff;"></div>
<div style="left:366px;top:658px;width:42px;height:30px;background:#fff;"></div>
<div style="left:409px;top:658px;width:110px;height:30px;background:#fff;"></div>
<div style="left:520px;top:658px;width:48px;height:30px;background:#fdf9f5;"></div>
<div style="left:569px;top:658px;width:59px;height:30px;background:#fdf9f5;"></div>
<div style="left:629px;top:658px;width:48px;height:30px;background:#fdf9f5;"></div>
<div style="left:678px;top:658px;width:65px;height:30px;background:#eff6fa;"></div>
<div style="left:744px;top:658px;width:64px;height:30px;background:#eff6fa;"></div>
<div style="left:809px;top:658px;width:65px;height:30px;background:#eff6fa;"></div>
<div style="left:875px;top:658px;width:42px;height:30px;background:#fff;"></div>
<div style="left:918px;top:658px;width:41px;height:30px;background:#fff;"></div>
<div style="left:960px;top:658px;width:61px;height:30px;background:#fff;"></div>
<div class="c" style="left:0px;top:659px;width:80px;height:30px;line-height:30px;color:#fff;font-size:14px;">西乙</div>
<div class="c" style="left:81px;top:659px;width:77px;height:30px;line-height:30px;color:#000;font-size:14px;">25-09-06</div>
<div class="c" style="left:159px;top:659px;width:111px;height:30px;line-height:30px;color:#008000;font-size:14px;"><span class="bd">1</span>阿尔巴塞特</div>
<div class="c" style="left:271px;top:659px;width:94px;height:30px;line-height:30px;color:#000;font-size:14px;"><span style="color:#ff0000">1-4</span>(0-1)</div>
<div class="c" style="left:366px;top:659px;width:42px;height:30px;line-height:30px;color:#000;font-size:14px;">5-2</div>
<div class="c" style="left:409px;top:659px;width:110px;height:30px;line-height:30px;color:#000;font-size:14px;">米兰德斯</div>
<div class="c" style="left:520px;top:659px;width:48px;height:30px;line-height:30px;color:#000;font-size:14px;">0.84</div>
<div class="c" style="left:569px;top:659px;width:59px;height:30px;line-height:30px;color:#000;font-size:14px;">半球</div>
<div class="c" style="left:629px;top:659px;width:48px;height:30px;line-height:30px;color:#000;font-size:14px;">1.05</div>
<div class="c" style="left:678px;top:659px;width:65px;height:30px;line-height:30px;color:#000;font-size:14px;">1.83</div>
<div class="c" style="left:744px;top:659px;width:64px;height:30px;line-height:30px;color:#000;font-size:14px;">3.36</div>
<div class="c" style="left:809px;top:659px;width:65px;height:30px;line-height:30px;color:#000;font-size:14px;">4.33</div>
<div class="c" style="left:875px;top:659px;width:42px;height:30px;line-height:30px;color:#008000;font-size:14px;">负</div>
<div class="c" style="left:918px;top:659px;width:41px;height:30px;line-height:30px;color:#008000;font-size:14px;">输</div>
<div class="c" style="left:960px;top:659px;width:61px;height:30px;line-height:30px;color:#ff0000;font-size:14px;">大</div>
<div style="left:0px;top:689px;width:80px;height:31px;background:#408a10;"></div>
<div style="left:81px;top:689px;width:77px;height:31px;background:#efefef;"></div>
<div style="left:159px;top:689px;width:111px;height:31px;background:#efefef;"></div>
<div style="left:271px;top:689px;width:94px;height:31px;background:#efefef;"></div>
<div style="left:366px;top:689px;width:42px;height:31px;background:#efefef;"></div>
<div style="left:409px;top:689px;width:110px;height:31px;background:#efefef;"></div>
<div style="left:520px;top:689px;width:48px;height:31px;background:#fdf9f5;"></div>
<div style="left:569px;top:689px;width:59px;height:31px;background:#fdf9f5;"></div>
<div style="left:629px;top:689px;width:48px;height:31px;background:#fdf9f5;"></div>
<div style="left:678px;top:689px;width:65px;height:31px;background:#eff6fa;"></div>
<div style="left:744px;top:689px;width:64px;height:31px;background:#eff6fa;"></div>
<div style="left:809px;top:689px;width:65px;height:31px;background:#eff6fa;"></div>
<div style="left:875px;top:689px;width:42px;height:31px;background:#efefef;"></div>
<div style="left:918px;top:689px;width:41px;height:31px;background:#efefef;"></div>
<div style="left:960px;top:689px;width:61px;height:31px;background:#efefef;"></div>
<div class="c" style="left:0px;top:690px;width:80px;height:30px;line-height:30px;color:#fff;font-size:14px;">西乙</div>
<div class="c" style="left:81px;top:690px;width:77px;height:30px;line-height:30px;color:#000;font-size:14px;">25-08-31</div>
<div class="c" style="left:159px;top:690px;width:111px;height:30px;line-height:30px;color:#000;font-size:14px;">加的斯</div>
<div class="c" style="left:271px;top:690px;width:94px;height:30px;line-height:30px;color:#000;font-size:14px;"><span style="color:#ff0000">2-1</span>(1-0)</div>
<div class="c" style="left:366px;top:690px;width:42px;height:30px;line-height:30px;color:#000;font-size:14px;">7-3</div>
<div class="c" style="left:409px;top:690px;width:110px;height:30px;line-height:30px;color:#008000;font-size:14px;">阿尔巴塞特<span class="bd">1</span></div>
<div class="c" style="left:520px;top:690px;width:48px;height:30px;line-height:30px;color:#000;font-size:14px;">0.91</div>
<div class="c" style="left:569px;top:690px;width:59px;height:30px;line-height:30px;color:#000;font-size:14px;">半球</div>
<div class="c" style="left:629px;top:690px;width:48px;height:30px;line-height:30px;color:#000;font-size:14px;">0.98</div>
<div class="c" style="left:678px;top:690px;width:65px;height:30px;line-height:30px;color:#000;font-size:14px;">1.81</div>
<div class="c" style="left:744px;top:690px;width:64px;height:30px;line-height:30px;color:#000;font-size:14px;">3.54</div>
<div class="c" style="left:809px;top:690px;width:65px;height:30px;line-height:30px;color:#000;font-size:14px;">4.17</div>
<div class="c" style="left:875px;top:690px;width:42px;height:30px;line-height:30px;color:#008000;font-size:14px;">负</div>
<div class="c" style="left:918px;top:690px;width:41px;height:30px;line-height:30px;color:#008000;font-size:14px;">输</div>
<div class="c" style="left:960px;top:690px;width:61px;height:30px;line-height:30px;color:#ff0000;font-size:14px;">大</div>
<div style="left:0px;top:721px;width:80px;height:30px;background:#408a10;"></div>
<div style="left:81px;top:721px;width:77px;height:30px;background:#fff;"></div>
<div style="left:159px;top:721px;width:111px;height:30px;background:#fff;"></div>
<div style="left:271px;top:721px;width:94px;height:30px;background:#fff;"></div>
<div style="left:366px;top:721px;width:42px;height:30px;background:#fff;"></div>
<div style="left:409px;top:721px;width:110px;height:30px;background:#fff;"></div>
<div style="left:520px;top:721px;width:48px;height:30px;background:#fdf9f5;"></div>
<div style="left:569px;top:721px;width:59px;height:30px;background:#fdf9f5;"></div>
<div style="left:629px;top:721px;width:48px;height:30px;background:#fdf9f5;"></div>
<div style="left:678px;top:721px;width:65px;height:30px;background:#eff6fa;"></div>
<div style="left:744px;top:721px;width:64px;height:30px;background:#eff6fa;"></div>
<div style="left:809px;top:721px;width:65px;height:30px;background:#eff6fa;"></div>
<div style="left:875px;top:721px;width:42px;height:30px;background:#fff;"></div>
<div style="left:918px;top:721px;width:41px;height:30px;background:#fff;"></div>
<div style="left:960px;top:721px;width:61px;height:30px;background:#fff;"></div>
<div class="c" style="left:0px;top:721px;width:80px;height:30px;line-height:30px;color:#fff;font-size:14px;">西乙</div>
<div class="c" style="left:81px;top:721px;width:77px;height:30px;line-height:30px;color:#000;font-size:14px;">25-08-26</div>
<div class="c" style="left:159px;top:721px;width:111px;height:30px;line-height:30px;color:#008000;font-size:14px;">阿尔巴塞特</div>
<div class="c" style="left:271px;top:721px;width:94px;height:30px;line-height:30px;color:#000;font-size:14px;"><span style="color:#ff0000">2-3</span>(0-0)</div>
<div class="c" style="left:366px;top:721px;width:42px;height:30px;line-height:30px;color:#000;font-size:14px;">2-10</div>
<div class="c" style="left:409px;top:721px;width:110px;height:30px;line-height:30px;color:#000;font-size:14px;">桑坦德竞技</div>
<div class="c" style="left:520px;top:721px;width:48px;height:30px;line-height:30px;color:#000;font-size:14px;">0.97</div>
<div class="c" style="left:569px;top:721px;width:59px;height:30px;line-height:30px;color:#000;font-size:14px;">半球</div>
<div class="c" style="left:629px;top:721px;width:48px;height:30px;line-height:30px;color:#000;font-size:14px;">0.92</div>
<div class="c" style="left:678px;top:721px;width:65px;height:30px;line-height:30px;color:#000;font-size:14px;">2.04</div>
<div class="c" style="left:744px;top:721px;width:64px;height:30px;line-height:30px;color:#000;font-size:14px;">3.41</div>
<div class="c" style="left:809px;top:721px;width:65px;height:30px;line-height:30px;color:#000;font-size:14px;">3.40</div>
<div class="c" style="left:875px;top:721px;width:42px;height:30px;line-height:30px;color:#008000;font-size:14px;">负</div>
<div class="c" style="left:918px;top:721px;width:41px;height:30px;line-height:30px;color:#008000;font-size:14px;">输</div>
<div class="c" style="left:960px;top:721px;width:61px;height:30px;line-height:30px;color:#ff0000;font-size:14px;">大</div>
<div style="left:0px;top:752px;width:80px;height:30px;background:#408a10;"></div>
<div style="left:81px;top:752px;width:77px;height:30px;background:#efefef;"></div>
<div style="left:159px;top:752px;width:111px;height:30px;background:#efefef;"></div>
<div style="left:271px;top:752px;width:94px;height:30px;background:#efefef;"></div>
<div style="left:366px;top:752px;width:42px;height:30px;background:#efefef;"></div>
<div style="left:409px;top:752px;width:110px;height:30px;background:#efefef;"></div>
<div style="left:520px;top:752px;width:48px;height:30px;background:#fdf9f5;"></div>
<div style="left:569px;top:752px;width:59px;height:30px;background:#fdf9f5;"></div>
<div style="left:629px;top:752px;width:48px;height:30px;background:#fdf9f5;"></div>
<div style="left:678px;top:752px;width:65px;height:30px;background:#eff6fa;"></div>
<div style="left:744px;top:752px;width:64px;height:30px;background:#eff6fa;"></div>
<div style="left:809px;top:752px;width:65px;height:30px;background:#eff6fa;"></div>
<div style="left:875px;top:752px;width:42px;height:30px;background:#efefef;"></div>
<div style="left:918px;top:752px;width:41px;height:30px;background:#efefef;"></div>
<div style="left:960px;top:752px;width:61px;height:30px;background:#efefef;"></div>
<div class="c" style="left:0px;top:753px;width:80px;height:30px;line-height:30px;color:#fff;font-size:14px;">西乙</div>
<div class="c" style="left:81px;top:753px;width:77px;height:30px;line-height:30px;color:#000;font-size:14px;">25-08-19</div>
<div class="c" style="left:159px;top:753px;width:111px;height:30px;line-height:30px;color:#000;font-size:14px;">阿尔梅里亚</div>
<div class="c" style="left:271px;top:753px;width:94px;height:30px;line-height:30px;color:#000;font-size:14px;"><span style="color:#ff0000">4-4</span>(1-1)</div>
<div class="c" style="left:366px;top:753px;width:42px;height:30px;line-height:30px;color:#000;font-size:14px;">17-5</div>
<div class="c" style="left:409px;top:753px;width:110px;height:30px;line-height:30px;color:#008000;font-size:14px;">阿尔巴塞特</div>
<div class="c" style="left:520px;top:753px;width:48px;height:30px;line-height:30px;color:#000;font-size:14px;">1.07</div>
<div class="c" style="left:569px;top:753px;width:59px;height:30px;line-height:30px;color:#000;font-size:14px;">一球</div>
<div class="c" style="left:629px;top:753px;width:48px;height:30px;line-height:30px;color:#000;font-size:14px;">0.82</div>
<div class="c" style="left:678px;top:753px;width:65px;height:30px;line-height:30px;color:#000;font-size:14px;">1.60</div>
<div class="c" style="left:744px;top:753px;width:64px;height:30px;line-height:30px;color:#000;font-size:14px;">4.01</div>
<div class="c" style="left:809px;top:753px;width:65px;height:30px;line-height:30px;color:#000;font-size:14px;">4.87</div>
<div class="c" style="left:875px;top:753px;width:42px;height:30px;line-height:30px;color:#0000ff;font-size:14px;">平</div>
<div class="c" style="left:918px;top:753px;width:41px;height:30px;line-height:30px;color:#ff0000;font-size:14px;">赢</div>
<div class="c" style="left:960px;top:753px;width:61px;height:30px;line-height:30px;color:#ff0000;font-size:14px;">大</div>
<div style="left:0px;top:783px;width:80px;height:31px;background:#12a5a8;"></div>
<div style="left:81px;top:783px;width:77px;height:31px;background:#fff;"></div>
<div style="left:159px;top:783px;width:111px;height:31px;background:#fff;"></div>
<div style="left:271px;top:783px;width:94px;height:31px;background:#fff;"></div>
<div style="left:366px;top:783px;width:42px;height:31px;background:#fff;"></div>
<div style="left:409px;top:783px;width:110px;height:31px;background:#fff;"></div>
<div style="left:520px;top:783px;width:48px;height:31px;background:#fdf9f5;"></div>
<div style="left:569px;top:783px;width:59px;height:31px;background:#fdf9f5;"></div>
<div style="left:629px;top:783px;width:48px;height:31px;background:#fdf9f5;"></div>
<div style="left:678px;top:783px;width:65px;height:31px;background:#eff6fa;"></div>
<div style="left:744px;top:783px;width:64px;height:31px;background:#eff6fa;"></div>
<div style="left:809px;top:783px;width:65px;height:31px;background:#eff6fa;"></div>
<div style="left:875px;top:783px;width:42px;height:31px;background:#fff;"></div>
<div style="left:918px;top:783px;width:41px;height:31px;background:#fff;"></div>
<div style="left:960px;top:783px;width:61px;height:31px;background:#fff;"></div>
<div class="c" style="left:0px;top:784px;width:80px;height:30px;line-height:30px;color:#fff;font-size:14px;">球会友谊</div>
<div class="c" style="left:81px;top:784px;width:77px;height:30px;line-height:30px;color:#000;font-size:14px;">25-08-10</div>
<div class="c" style="left:159px;top:784px;width:111px;height:30px;line-height:30px;color:#008000;font-size:14px;">阿尔巴塞特</div>
<div class="c" style="left:271px;top:784px;width:94px;height:30px;line-height:30px;color:#000;font-size:14px;"><span style="color:#ff0000">0-1</span>(0-0)</div>
<div class="c" style="left:366px;top:784px;width:42px;height:30px;line-height:30px;color:#000;font-size:14px;">5-4</div>
<div class="c" style="left:409px;top:784px;width:110px;height:30px;line-height:30px;color:#000;font-size:14px;">卡斯迪隆</div>
<div class="c" style="left:520px;top:784px;width:48px;height:30px;line-height:30px;color:#000;font-size:14px;">1.09</div>
<div class="c" style="left:569px;top:784px;width:59px;height:30px;line-height:30px;color:#000;font-size:14px;">平手</div>
<div class="c" style="left:629px;top:784px;width:48px;height:30px;line-height:30px;color:#000;font-size:14px;">0.73</div>
<div class="c" style="left:678px;top:784px;width:65px;height:30px;line-height:30px;color:#000;font-size:14px;">2.58</div>
<div class="c" style="left:744px;top:784px;width:64px;height:30px;line-height:30px;color:#000;font-size:14px;">3.62</div>
<div class="c" style="left:809px;top:784px;width:65px;height:30px;line-height:30px;color:#000;font-size:14px;">2.29</div>
<div class="c" style="left:875px;top:784px;width:42px;height:30px;line-height:30px;color:#008000;font-size:14px;">负</div>
<div class="c" style="left:918px;top:784px;width:41px;height:30px;line-height:30px;color:#008000;font-size:14px;">输</div>
<div class="c" style="left:960px;top:784px;width:61px;height:30px;line-height:30px;color:#008000;font-size:14px;">小</div>
<div style="left:0px;top:815px;width:80px;height:30px;background:#12a5a8;"></div>
<div style="left:81px;top:815px;width:77px;height:30px;background:#efefef;"></div>
<div style="left:159px;top:815px;width:111px;height:30px;background:#efefef;"></div>
<div style="left:271px;top:815px;width:94px;height:30px;background:#efefef;"></div>
<div style="left:366px;top:815px;width:42px;height:30px;background:#efefef;"></div>
<div style="left:409px;top:815px;width:110px;height:30px;background:#efefef;"></div>
<div style="left:520px;top:815px;width:48px;height:30px;background:#fdf9f5;"></div>
<div style="left:569px;top:815px;width:59px;height:30px;background:#fdf9f5;"></div>
<div style="left:629px;top:815px;width:48px;height:30px;background:#fdf9f5;"></div>
<div style="left:678px;top:815px;width:65px;height:30px;background:#eff6fa;"></div>
<div style="left:744px;top:815px;width:64px;height:30px;background:#eff6fa;"></div>
<div style="left:809px;top:815px;width:65px;height:30px;background:#eff6fa;"></div>
<div style="left:875px;top:815px;width:42px;height:30px;background:#efefef;"></div>
<div style="left:918px;top:815px;width:41px;height:30px;background:#efefef;"></div>
<div style="left:960px;top:815px;width:61px;height:30px;background:#efefef;"></div>
<div class="c" style="left:0px;top:815px;width:80px;height:30px;line-height:30px;color:#fff;font-size:14px;">球会友谊</div>
<div class="c" style="left:81px;top:815px;width:77px;height:30px;line-height:30px;color:#000;font-size:14px;">25-08-09</div>
<div class="c" style="left:159px;top:815px;width:111px;height:30px;line-height:30px;color:#008000;font-size:14px;">阿尔巴塞特</div>
<div class="c" style="left:271px;top:815px;width:94px;height:30px;line-height:30px;color:#000;font-size:14px;"><span style="color:#ff0000">2-1</span>(0-1)</div>
<div class="c" style="left:366px;top:815px;width:42px;height:30px;line-height:30px;color:#000;font-size:14px;">5-6</div>
<div class="c" style="left:409px;top:815px;width:110px;height:30px;line-height:30px;color:#000;font-size:14px;">卡塔赫纳</div>
<div class="c" style="left:520px;top:815px;width:48px;height:30px;line-height:30px;color:#000;font-size:14px;"></div>
<div class="c" style="left:569px;top:815px;width:59px;height:30px;line-height:30px;color:#000;font-size:14px;"></div>
<div class="c" style="left:629px;top:815px;width:48px;height:30px;line-height:30px;color:#000;font-size:14px;"></div>
<div class="c" style="left:678px;top:815px;width:65px;height:30px;line-height:30px;color:#000;font-size:14px;">1.54</div>
<div class="c" style="left:744px;top:815px;width:64px;height:30px;line-height:30px;color:#000;font-size:14px;">4.03</div>
<div class="c" style="left:809px;top:815px;width:65px;height:30px;line-height:30px;color:#000;font-size:14px;">4.78</div>
<div class="c" style="left:875px;top:815px;width:42px;height:30px;line-height:30px;color:#ff0000;font-size:14px;">胜</div>
<div class="c" style="left:918px;top:815px;width:41px;height:30px;line-height:30px;color:#000;font-size:14px;"></div>
<div class="c" style="left:960px;top:815px;width:61px;height:30px;line-height:30px;color:#000;font-size:14px;"></div>
<div style="left:0px;top:563px;width:1022px;height:1px;background:#bcbcbc;"></div>
<div style="left:0px;top:594px;width:1022px;height:1px;background:#bcbcbc;"></div>
<div style="left:0px;top:626px;width:1022px;height:1px;background:#bcbcbc;"></div>
<div style="left:0px;top:657px;width:1022px;height:1px;background:#bcbcbc;"></div>
<div style="left:0px;top:688px;width:1022px;height:1px;background:#bcbcbc;"></div>
<div style="left:0px;top:720px;width:1022px;height:1px;background:#bcbcbc;"></div>
<div style="left:0px;top:751px;width:1022px;height:1px;background:#bcbcbc;"></div>
<div style="left:0px;top:782px;width:1022px;height:1px;background:#bcbcbc;"></div>
<div style="left:0px;top:814px;width:1022px;height:1px;background:#bcbcbc;"></div>
<div style="left:0px;top:845px;width:1022px;height:1px;background:#bcbcbc;"></div>
<div style="left:80px;top:531px;width:1px;height:33px;background:#bcbcbc;"></div>
<div style="left:158px;top:531px;width:1px;height:33px;background:#bcbcbc;"></div>
<div style="left:270px;top:531px;width:1px;height:33px;background:#bcbcbc;"></div>
<div style="left:365px;top:531px;width:1px;height:33px;background:#bcbcbc;"></div>
<div style="left:408px;top:531px;width:1px;height:33px;background:#bcbcbc;"></div>
<div style="left:519px;top:531px;width:1px;height:33px;background:#bcbcbc;"></div>
<div style="left:568px;top:531px;width:1px;height:33px;background:#bcbcbc;"></div>
<div style="left:628px;top:531px;width:1px;height:33px;background:#bcbcbc;"></div>
<div style="left:677px;top:531px;width:1px;height:33px;background:#bcbcbc;"></div>
<div style="left:743px;top:531px;width:1px;height:33px;background:#bcbcbc;"></div>
<div style="left:808px;top:531px;width:1px;height:33px;background:#bcbcbc;"></div>
<div style="left:874px;top:531px;width:1px;height:33px;background:#bcbcbc;"></div>
<div style="left:917px;top:531px;width:1px;height:33px;background:#bcbcbc;"></div>
<div style="left:959px;top:531px;width:1px;height:33px;background:#bcbcbc;"></div>
<div style="left:1021px;top:531px;width:1px;height:33px;background:#bcbcbc;"></div>
<div style="left:80px;top:563px;width:1px;height:32px;background:#bcbcbc;"></div>
<div style="left:158px;top:563px;width:1px;height:32px;background:#bcbcbc;"></div>
<div style="left:270px;top:563px;width:1px;height:32px;background:#bcbcbc;"></div>
<div style="left:365px;top:563px;width:1px;height:32px;background:#bcbcbc;"></div>
<div style="left:408px;top:563px;width:1px;height:32px;background:#bcbcbc;"></div>
<div style="left:519px;top:563px;width:1px;height:32px;background:#bcbcbc;"></div>
<div style="left:568px;top:563px;width:1px;height:32px;background:#bcbcbc;"></div>
<div style="left:628px;top:563px;width:1px;height:32px;background:#bcbcbc;"></div>
<div style="left:677px;top:563px;width:1px;height:32px;background:#bcbcbc;"></div>
<div style="left:743px;top:563px;width:1px;height:32px;background:#bcbcbc;"></div>
<div style="left:808px;top:563px;width:1px;height:32px;background:#bcbcbc;"></div>
<div style="left:874px;top:563px;width:1px;height:32px;background:#bcbcbc;"></div>
<div style="left:917px;top:563px;width:1px;height:32px;background:#bcbcbc;"></div>
<div style="left:959px;top:563px;width:1px;height:32px;background:#bcbcbc;"></div>
<div style="left:1021px;top:563px;width:1px;height:32px;background:#bcbcbc;"></div>
<div style="left:80px;top:594px;width:1px;height:33px;background:#bcbcbc;"></div>
<div style="left:158px;top:594px;width:1px;height:33px;background:#bcbcbc;"></div>
<div style="left:270px;top:594px;width:1px;height:33px;background:#bcbcbc;"></div>
<div style="left:365px;top:594px;width:1px;height:33px;background:#bcbcbc;"></div>
<div style="left:408px;top:594px;width:1px;height:33px;background:#bcbcbc;"></div>
<div style="left:519px;top:594px;width:1px;height:33px;background:#bcbcbc;"></div>
<div style="left:568px;top:594px;width:1px;height:33px;background:#bcbcbc;"></div>
<div style="left:628px;top:594px;width:1px;height:33px;background:#bcbcbc;"></div>
<div style="left:677px;top:594px;width:1px;height:33px;background:#bcbcbc;"></div>
<div style="left:743px;top:594px;width:1px;height:33px;background:#bcbcbc;"></div>
<div style="left:808px;top:594px;width:1px;height:33px;background:#bcbcbc;"></div>
<div style="left:874px;top:594px;width:1px;height:33px;background:#bcbcbc;"></div>
<div style="left:917px;top:594px;width:1px;height:33px;background:#bcbcbc;"></div>
<div style="left:959px;top:594px;width:1px;height:33px;background:#bcbcbc;"></div>
<div style="left:1021px;top:594px;width:1px;height:33px;background:#bcbcbc;"></div>
<div style="left:80px;top:626px;width:1px;height:32px;background:#bcbcbc;"></div>
<div style="left:158px;top:626px;width:1px;height:32px;background:#bcbcbc;"></div>
<div style="left:270px;top:626px;width:1px;height:32px;background:#bcbcbc;"></div>
<div style="left:365px;top:626px;width:1px;height:32px;background:#bcbcbc;"></div>
<div style="left:408px;top:626px;width:1px;height:32px;background:#bcbcbc;"></div>
<div style="left:519px;top:626px;width:1px;height:32px;background:#bcbcbc;"></div>
<div style="left:568px;top:626px;width:1px;height:32px;background:#bcbcbc;"></div>
<div style="left:628px;top:626px;width:1px;height:32px;background:#bcbcbc;"></div>
<div style="left:677px;top:626px;width:1px;height:32px;background:#bcbcbc;"></div>
<div style="left:743px;top:626px;width:1px;height:32px;background:#bcbcbc;"></div>
<div style="left:808px;top:626px;width:1px;height:32px;background:#bcbcbc;"></div>
<div style="left:874px;top:626px;width:1px;height:32px;background:#bcbcbc;"></div>
<div style="left:917px;top:626px;width:1px;height:32px;background:#bcbcbc;"></div>
<div style="left:959px;top:626px;width:1px;height:32px;background:#bcbcbc;"></div>
<div style="left:1021px;top:626px;width:1px;height:32px;background:#bcbcbc;"></div>
<div style="left:80px;top:657px;width:1px;height:32px;background:#bcbcbc;"></div>
<div style="left:158px;top:657px;width:1px;height:32px;background:#bcbcbc;"></div>
<div style="left:270px;top:657px;width:1px;height:32px;background:#bcbcbc;"></div>
<div style="left:365px;top:657px;width:1px;height:32px;background:#bcbcbc;"></div>
<div style="left:408px;top:657px;width:1px;height:32px;background:#bcbcbc;"></div>
<div style="left:519px;top:657px;width:1px;height:32px;background:#bcbcbc;"></div>
<div style="left:568px;top:657px;width:1px;height:32px;background:#bcbcbc;"></div>
<div style="left:628px;top:657px;width:1px;height:32px;background:#bcbcbc;"></div>
<div style="left:677px;top:657px;width:1px;height:32px;background:#bcbcbc;"></div>
<div style="left:743px;top:657px;width:1px;height:32px;background:#bcbcbc;"></div>
<div style="left:808px;top:657px;width:1px;height:32px;background:#bcbcbc;"></div>
<div style="left:874px;top:657px;width:1px;height:32px;background:#bcbcbc;"></div>
<div style="left:917px;top:657px;width:1px;height:32px;background:#bcbcbc;"></div>
<div style="left:959px;top:657px;width:1px;height:32px;background:#bcbcbc;"></div>
<div style="left:1021px;top:657px;width:1px;height:32px;background:#bcbcbc;"></div>
<div style="left:80px;top:688px;width:1px;height:33px;background:#bcbcbc;"></div>
<div style="left:158px;top:688px;width:1px;height:33px;background:#bcbcbc;"></div>
<div style="left:270px;top:688px;width:1px;height:33px;background:#bcbcbc;"></div>
<div style="left:365px;top:688px;width:1px;height:33px;background:#bcbcbc;"></div>
<div style="left:408px;top:688px;width:1px;height:33px;background:#bcbcbc;"></div>
<div style="left:519px;top:688px;width:1px;height:33px;background:#bcbcbc;"></div>
<div style="left:568px;top:688px;width:1px;height:33px;background:#bcbcbc;"></div>
<div style="left:628px;top:688px;width:1px;height:33px;background:#bcbcbc;"></div>
<div style="left:677px;top:688px;width:1px;height:33px;background:#bcbcbc;"></div>
<div style="left:743px;top:688px;width:1px;height:33px;background:#bcbcbc;"></div>
<div style="left:808px;top:688px;width:1px;height:33px;background:#bcbcbc;"></div>
<div style="left:874px;top:688px;width:1px;height:33px;background:#bcbcbc;"></div>
<div style="left:917px;top:688px;width:1px;height:33px;background:#bcbcbc;"></div>
<div style="left:959px;top:688px;width:1px;height:33px;background:#bcbcbc;"></div>
<div style="left:1021px;top:688px;width:1px;height:33px;background:#bcbcbc;"></div>
<div style="left:80px;top:720px;width:1px;height:32px;background:#bcbcbc;"></div>
<div style="left:158px;top:720px;width:1px;height:32px;background:#bcbcbc;"></div>
<div style="left:270px;top:720px;width:1px;height:32px;background:#bcbcbc;"></div>
<div style="left:365px;top:720px;width:1px;height:32px;background:#bcbcbc;"></div>
<div style="left:408px;top:720px;width:1px;height:32px;background:#bcbcbc;"></div>
<div style="left:519px;top:720px;width:1px;height:32px;background:#bcbcbc;"></div>
<div style="left:568px;top:720px;width:1px;height:32px;background:#bcbcbc;"></div>
<div style="left:628px;top:720px;width:1px;height:32px;background:#bcbcbc;"></div>
<div style="left:677px;top:720px;width:1px;height:32px;background:#bcbcbc;"></div>
<div style="left:743px;top:720px;width:1px;height:32px;background:#bcbcbc;"></div>
<div style="left:808px;top:720px;width:1px;height:32px;background:#bcbcbc;"></div>
<div style="left:874px;top:720px;width:1px;height:32px;background:#bcbcbc;"></div>
<div style="left:917px;top:720px;width:1px;height:32px;background:#bcbcbc;"></div>
<div style="left:959px;top:720px;width:1px;height:32px;background:#bcbcbc;"></div>
<div style="left:1021px;top:720px;width:1px;height:32px;background:#bcbcbc;"></div>
<div style="left:80px;top:751px;width:1px;height:32px;background:#bcbcbc;"></div>
<div style="left:158px;top:751px;width:1px;height:32px;background:#bcbcbc;"></div>
<div style="left:270px;top:751px;width:1px;height:32px;background:#bcbcbc;"></div>
<div style="left:365px;top:751px;width:1px;height:32px;background:#bcbcbc;"></div>
<div style="left:408px;top:751px;width:1px;height:32px;background:#bcbcbc;"></div>
<div style="left:519px;top:751px;width:1px;height:32px;background:#bcbcbc;"></div>
<div style="left:568px;top:751px;width:1px;height:32px;background:#bcbcbc;"></div>
<div style="left:628px;top:751px;width:1px;height:32px;background:#bcbcbc;"></div>
<div style="left:677px;top:751px;width:1px;height:32px;background:#bcbcbc;"></div>
<div style="left:743px;top:751px;width:1px;height:32px;background:#bcbcbc;"></div>
<div style="left:808px;top:751px;width:1px;height:32px;background:#bcbcbc;"></div>
<div style="left:874px;top:751px;width:1px;height:32px;background:#bcbcbc;"></div>
<div style="left:917px;top:751px;width:1px;height:32px;background:#bcbcbc;"></div>
<div style="left:959px;top:751px;width:1px;height:32px;background:#bcbcbc;"></div>
<div style="left:1021px;top:751px;width:1px;height:32px;background:#bcbcbc;"></div>
<div style="left:80px;top:782px;width:1px;height:33px;background:#bcbcbc;"></div>
<div style="left:158px;top:782px;width:1px;height:33px;background:#bcbcbc;"></div>
<div style="left:270px;top:782px;width:1px;height:33px;background:#bcbcbc;"></div>
<div style="left:365px;top:782px;width:1px;height:33px;background:#bcbcbc;"></div>
<div style="left:408px;top:782px;width:1px;height:33px;background:#bcbcbc;"></div>
<div style="left:519px;top:782px;width:1px;height:33px;background:#bcbcbc;"></div>
<div style="left:568px;top:782px;width:1px;height:33px;background:#bcbcbc;"></div>
<div style="left:628px;top:782px;width:1px;height:33px;background:#bcbcbc;"></div>
<div style="left:677px;top:782px;width:1px;height:33px;background:#bcbcbc;"></div>
<div style="left:743px;top:782px;width:1px;height:33px;background:#bcbcbc;"></div>
<div style="left:808px;top:782px;width:1px;height:33px;background:#bcbcbc;"></div>
<div style="left:874px;top:782px;width:1px;height:33px;background:#bcbcbc;"></div>
<div style="left:917px;top:782px;width:1px;height:33px;background:#bcbcbc;"></div>
<div style="left:959px;top:782px;width:1px;height:33px;background:#bcbcbc;"></div>
<div style="left:1021px;top:782px;width:1px;height:33px;background:#bcbcbc;"></div>
<div style="left:80px;top:814px;width:1px;height:32px;background:#bcbcbc;"></div>
<div style="left:158px;top:814px;width:1px;height:32px;background:#bcbcbc;"></div>
<div style="left:270px;top:814px;width:1px;height:32px;background:#bcbcbc;"></div>
<div style="left:365px;top:814px;width:1px;height:32px;background:#bcbcbc;"></div>
<div style="left:408px;top:814px;width:1px;height:32px;background:#bcbcbc;"></div>
<div style="left:519px;top:814px;width:1px;height:32px;background:#bcbcbc;"></div>
<div style="left:568px;top:814px;width:1px;height:32px;background:#bcbcbc;"></div>
<div style="left:628px;top:814px;width:1px;height:32px;background:#bcbcbc;"></div>
<div style="left:677px;top:814px;width:1px;height:32px;background:#bcbcbc;"></div>
<div style="left:743px;top:814px;width:1px;height:32px;background:#bcbcbc;"></div>
<div style="left:808px;top:814px;width:1px;height:32px;background:#bcbcbc;"></div>
<div style="left:874px;top:814px;width:1px;height:32px;background:#bcbcbc;"></div>
<div style="left:917px;top:814px;width:1px;height:32px;background:#bcbcbc;"></div>
<div style="left:959px;top:814px;width:1px;height:32px;background:#bcbcbc;"></div>
<div style="left:1021px;top:814px;width:1px;height:32px;background:#bcbcbc;"></div>
<div style="left:1021px;top:845px;width:1px;height:30px;background:#bcbcbc;"></div>
<div class="sum" style="left:325px;top:848px;height:29px;line-height:29px;">近<span style="color:#f00">10</span>场,胜4平2负4, 胜率:<span style="color:#00f">40%</span> 赢率:<span style="color:#00f">50%</span> 大:<span style="color:#00f">62.5%</span> 单率:<span style="color:#00f">60%</span></div>
<div class="c" style="left:380px;top:45px;height:20px;line-height:20px;justify-content:flex-start;">近</div>
<div class="sel" style="left:398px;top:46px;width:37px;height:16px;"><span style="position:absolute;left:5px;top:0;line-height:16px;font-size:13px">10</span><svg style="position:absolute;left:23px;top:6px" width="10" height="6" viewBox="0 0 10 6"><path d="M1 1 L5.0 5 L9 1" fill="none" stroke="#111" stroke-width="2.3" stroke-linecap="round" stroke-linejoin="round"/></svg></div>
<div class="c" style="left:442px;top:45px;height:20px;line-height:20px;justify-content:flex-start;">场</div>
<div style="left:461px;top:49px;width:11px;height:11px;background:#fff;border:1px solid #767676;border-radius:2px;"></div>
<div class="c" style="left:479px;top:45px;height:20px;line-height:20px;justify-content:flex-start;">同主</div>
<div style="left:508px;top:49px;width:13px;height:13px;background:#0a78e6;border-radius:2px;"><svg style="position:absolute;left:0;top:0" width="13" height="13" viewBox="0 0 13 13"><path d="M2.6 6.8 L5.2 9.4 L10.6 3.4" fill="none" stroke="#fff" stroke-width="2"/></svg></div>
<div class="c" style="left:521px;top:45px;height:20px;line-height:20px;justify-content:flex-start;">西乙</div>
<div style="left:550px;top:49px;width:13px;height:13px;background:#0a78e6;border-radius:2px;"><svg style="position:absolute;left:0;top:0" width="13" height="13" viewBox="0 0 13 13"><path d="M2.6 6.8 L5.2 9.4 L10.6 3.4" fill="none" stroke="#fff" stroke-width="2"/></svg></div>
<div class="c" style="left:564px;top:45px;height:20px;line-height:20px;justify-content:flex-start;">球会友谊</div>
<div style="left:621px;top:49px;width:13px;height:13px;background:#0a78e6;border-radius:2px;"><svg style="position:absolute;left:0;top:0" width="13" height="13" viewBox="0 0 13 13"><path d="M2.6 6.8 L5.2 9.4 L10.6 3.4" fill="none" stroke="#fff" stroke-width="2"/></svg></div>
<div class="c" style="left:634px;top:45px;height:20px;line-height:20px;justify-content:flex-start;">西协甲</div>
<div style="left:678px;top:49px;width:13px;height:13px;background:#0a78e6;border-radius:2px;"><svg style="position:absolute;left:0;top:0" width="13" height="13" viewBox="0 0 13 13"><path d="M2.6 6.8 L5.2 9.4 L10.6 3.4" fill="none" stroke="#fff" stroke-width="2"/></svg></div>
<div class="c" style="left:691px;top:45px;height:20px;line-height:20px;justify-content:flex-start;">西杯</div>
<div class="c" style="left:413px;top:465px;height:20px;line-height:20px;justify-content:flex-start;">近</div>
<div class="sel" style="left:433px;top:466px;width:36px;height:16px;"><span style="position:absolute;left:5px;top:0;line-height:16px;font-size:13px">10</span><svg style="position:absolute;left:22px;top:6px" width="10" height="6" viewBox="0 0 10 6"><path d="M1 1 L5.0 5 L9 1" fill="none" stroke="#111" stroke-width="2.3" stroke-linecap="round" stroke-linejoin="round"/></svg></div>
<div class="c" style="left:475px;top:465px;height:20px;line-height:20px;justify-content:flex-start;">场</div>
<div style="left:494px;top:469px;width:11px;height:11px;background:#fff;border:1px solid #767676;border-radius:2px;"></div>
<div class="c" style="left:512px;top:465px;height:20px;line-height:20px;justify-content:flex-start;">同客</div>
<div style="left:544px;top:469px;width:13px;height:13px;background:#0a78e6;border-radius:2px;"><svg style="position:absolute;left:0;top:0" width="13" height="13" viewBox="0 0 13 13"><path d="M2.6 6.8 L5.2 9.4 L10.6 3.4" fill="none" stroke="#fff" stroke-width="2"/></svg></div>
<div class="c" style="left:557px;top:465px;height:20px;line-height:20px;justify-content:flex-start;">西乙</div>
<div style="left:588px;top:469px;width:13px;height:13px;background:#0a78e6;border-radius:2px;"><svg style="position:absolute;left:0;top:0" width="13" height="13" viewBox="0 0 13 13"><path d="M2.6 6.8 L5.2 9.4 L10.6 3.4" fill="none" stroke="#fff" stroke-width="2"/></svg></div>
<div class="c" style="left:601px;top:465px;height:20px;line-height:20px;justify-content:flex-start;">球会友谊</div>
<div style="left:659px;top:469px;width:13px;height:13px;background:#0a78e6;border-radius:2px;"><svg style="position:absolute;left:0;top:0" width="13" height="13" viewBox="0 0 13 13"><path d="M2.6 6.8 L5.2 9.4 L10.6 3.4" fill="none" stroke="#fff" stroke-width="2"/></svg></div>
<div class="c" style="left:672px;top:465px;height:20px;line-height:20px;justify-content:flex-start;">西杯</div>
</body></html>
